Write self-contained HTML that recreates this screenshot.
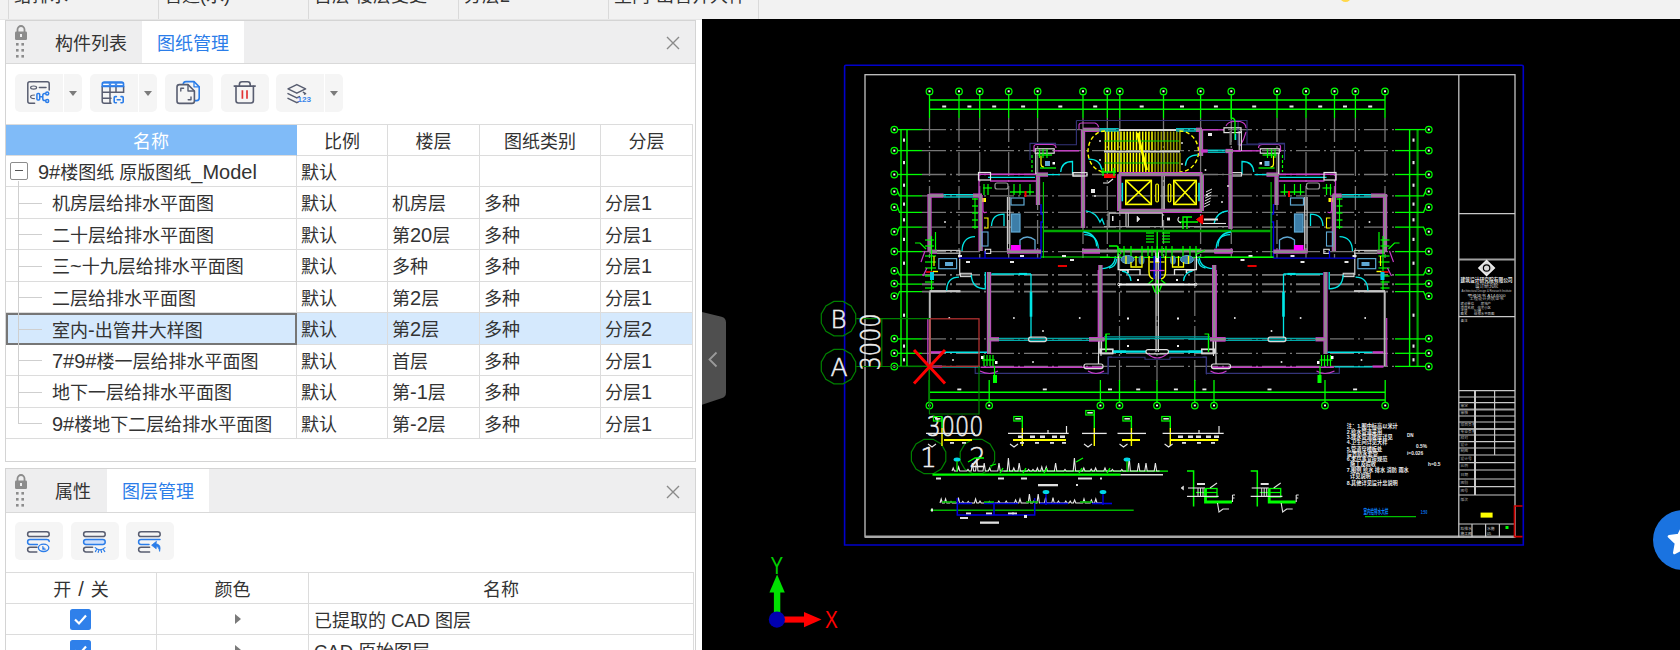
<!DOCTYPE html>
<html lang="zh-CN">
<head>
<meta charset="utf-8">
<title>图纸管理</title>
<style>
html,body{margin:0;padding:0;}
body{width:1680px;height:650px;overflow:hidden;position:relative;background:#fff;font-family:"Liberation Sans","Noto Sans CJK SC",sans-serif;font-size:18px;color:#333;}
.abs{position:absolute;}
#top{left:0;top:0;width:1680px;height:19px;background:#f2f2f2;border-bottom:1px solid #e6e6e6;overflow:hidden;}
#top .sep{position:absolute;top:0;width:1px;height:19px;background:#dadada;}
#top .t{position:absolute;top:-15px;font-size:18px;line-height:22px;color:#333;white-space:nowrap;}
#cad{left:702px;top:19px;width:978px;height:631px;background:#000;}
.panel{left:5px;width:691px;border:1px solid #d4d4d4;background:#fff;box-sizing:border-box;}
.tabbar{position:absolute;left:0;top:0;width:689px;height:42px;background:#eeeeef;border-bottom:1px solid #d9d9d9;}
.tab{position:absolute;top:0;height:42px;line-height:46px;overflow:hidden;font-size:18px;white-space:nowrap;color:#333;}
.tab.act{background:#fff;color:#2b7de9;height:42px;}
.close{position:absolute;right:15px;top:15px;width:14px;height:14px;}
.btn{position:absolute;height:38px;background:#f5f5f5;}
.btn.l{border-radius:5px 0 0 5px;width:48px;}
.btn.r{border-radius:0 5px 5px 0;width:18px;}
.btn.s{border-radius:5px;width:48px;}
.arr{position:absolute;left:5px;top:17px;width:0;height:0;border-left:4px solid transparent;border-right:4px solid transparent;border-top:5px solid #7b7b7b;}
.grid{position:absolute;}
.cell{position:absolute;box-sizing:border-box;border-right:1px solid #dcdcdc;border-bottom:1px solid #dcdcdc;white-space:nowrap;overflow:hidden;font-size:18px;}
.la{font-size:20px;letter-spacing:0;line-height:0;}
.lu{font-size:18.5px;line-height:0;}
</style>
</head>
<body>
<div id="top" class="abs">
  <div class="sep" style="left:8px"></div><div class="sep" style="left:158px"></div><div class="sep" style="left:308px"></div><div class="sep" style="left:458px"></div><div class="sep" style="left:608px"></div><div class="sep" style="left:758px"></div>
  <div class="t" style="left:14px">给排水</div>
  <div class="t" style="left:164px">管道(水)</div>
  <div class="t" style="left:314px">首层 楼层变更</div>
  <div class="t" style="left:464px">分层2</div>
  <div class="t" style="left:614px">室内-出管井大样</div>
  <div class="abs" style="left:1340px;top:-9px;width:11px;height:11px;border-radius:6px;background:#ffd84a;"></div>
</div>
<div id="cad" class="abs">
<svg class="abs" style="left:0;top:1px" width="978" height="630" viewBox="702 20 978 630" font-family="'Liberation Sans',sans-serif">
<g id="frames">
<path d="M844.6 545 V66.5 Q844.6 65.3 845.8 65.3 H1522 Q1523.3 65.3 1523.3 66.5 V545 Z" stroke="#0000cc" stroke-width="1.6" fill="none"/>
<rect x="865" y="74.7" width="650" height="462.3" stroke="#c4c4c4" stroke-width="1.3" fill="none"/>
<line x1="865" y1="536.8" x2="1515" y2="536.8" stroke="#a8a8a8" stroke-width="2.6"/>
<line x1="1458.8" y1="74.7" x2="1458.8" y2="537" stroke="#c4c4c4" stroke-width="1.3"/>
<line x1="1458.8" y1="213.6" x2="1515" y2="213.6" stroke="#c8c8c8" stroke-width="1.2"/>
<line x1="1458.8" y1="316.6" x2="1515" y2="316.6" stroke="#c8c8c8" stroke-width="1.2"/>
<line x1="1458.8" y1="390.6" x2="1515" y2="390.6" stroke="#c8c8c8" stroke-width="1.2"/>
<line x1="1458.8" y1="397" x2="1515" y2="397" stroke="#c8c8c8" stroke-width="1.2"/>
<line x1="1458.8" y1="402.6" x2="1515" y2="402.6" stroke="#c8c8c8" stroke-width="1.2"/>
<line x1="1458.8" y1="416" x2="1515" y2="416" stroke="#c8c8c8" stroke-width="1.2"/>
<line x1="1458.8" y1="422" x2="1515" y2="422" stroke="#c8c8c8" stroke-width="1.2"/>
<line x1="1458.8" y1="435" x2="1515" y2="435" stroke="#c8c8c8" stroke-width="1.2"/>
<line x1="1458.8" y1="441.6" x2="1515" y2="441.6" stroke="#c8c8c8" stroke-width="1.2"/>
<line x1="1458.8" y1="448" x2="1515" y2="448" stroke="#c8c8c8" stroke-width="1.2"/>
<line x1="1458.8" y1="455" x2="1515" y2="455" stroke="#c8c8c8" stroke-width="1.2"/>
<line x1="1458.8" y1="462.6" x2="1515" y2="462.6" stroke="#c8c8c8" stroke-width="1.2"/>
<line x1="1458.8" y1="470" x2="1515" y2="470" stroke="#c8c8c8" stroke-width="1.2"/>
<line x1="1458.8" y1="479" x2="1515" y2="479" stroke="#c8c8c8" stroke-width="1.2"/>
<line x1="1458.8" y1="486.6" x2="1515" y2="486.6" stroke="#c8c8c8" stroke-width="1.2"/>
<line x1="1458.8" y1="495" x2="1515" y2="495" stroke="#c8c8c8" stroke-width="1.2"/>
<line x1="1458.8" y1="524" x2="1515" y2="524" stroke="#c8c8c8" stroke-width="1.2"/>
<line x1="1458.8" y1="259.4" x2="1515" y2="259.4" stroke="#a0a0a0" stroke-width="2"/>
<line x1="1458.8" y1="409.4" x2="1515" y2="409.4" stroke="#a0a0a0" stroke-width="2"/>
<line x1="1458.8" y1="429" x2="1515" y2="429" stroke="#a0a0a0" stroke-width="2"/>
<line x1="1475" y1="390.6" x2="1475" y2="495" stroke="#c8c8c8" stroke-width="2"/>
<line x1="1494.6" y1="390.6" x2="1494.6" y2="455" stroke="#c8c8c8" stroke-width="1.2"/>
<line x1="1472" y1="524" x2="1472" y2="537" stroke="#c8c8c8" stroke-width="1.2"/>
<line x1="1485.6" y1="524" x2="1485.6" y2="537" stroke="#c8c8c8" stroke-width="1.2"/>
<line x1="1499.4" y1="524" x2="1499.4" y2="537" stroke="#c8c8c8" stroke-width="1.2"/>
<rect x="1480.6" y="512.6" width="12" height="5" fill="#ffff00"/>
<rect x="1505.5" y="526" width="3" height="3" fill="#00ff00"/>
<path d="M1522.5 506 H1514.5 V536.6 H1522.5" stroke="#d00000" stroke-width="1.6" fill="none"/>
</g>
<g id="grid">
<line x1="929.5" y1="118" x2="929.5" y2="258" stroke="#767676" stroke-width="1.3" stroke-dasharray="24 4 2 4"/>
<line x1="959" y1="118" x2="959" y2="258" stroke="#767676" stroke-width="1.3" stroke-dasharray="24 4 2 4"/>
<line x1="979.7" y1="118" x2="979.7" y2="258" stroke="#767676" stroke-width="1.3" stroke-dasharray="24 4 2 4"/>
<line x1="1008.7" y1="118" x2="1008.7" y2="258" stroke="#767676" stroke-width="1.3" stroke-dasharray="24 4 2 4"/>
<line x1="1037.6" y1="118" x2="1037.6" y2="258" stroke="#767676" stroke-width="1.3" stroke-dasharray="24 4 2 4"/>
<line x1="1083" y1="118" x2="1083" y2="258" stroke="#767676" stroke-width="1.3" stroke-dasharray="24 4 2 4"/>
<line x1="1107.3" y1="118" x2="1107.3" y2="258" stroke="#767676" stroke-width="1.3" stroke-dasharray="24 4 2 4"/>
<line x1="1119.8" y1="118" x2="1119.8" y2="258" stroke="#767676" stroke-width="1.3" stroke-dasharray="24 4 2 4"/>
<line x1="1163.5" y1="118" x2="1163.5" y2="258" stroke="#767676" stroke-width="1.3" stroke-dasharray="24 4 2 4"/>
<line x1="1200.6" y1="118" x2="1200.6" y2="258" stroke="#767676" stroke-width="1.3" stroke-dasharray="24 4 2 4"/>
<line x1="1231.3" y1="118" x2="1231.3" y2="258" stroke="#767676" stroke-width="1.3" stroke-dasharray="24 4 2 4"/>
<line x1="1277" y1="118" x2="1277" y2="258" stroke="#767676" stroke-width="1.3" stroke-dasharray="24 4 2 4"/>
<line x1="1306" y1="118" x2="1306" y2="258" stroke="#767676" stroke-width="1.3" stroke-dasharray="24 4 2 4"/>
<line x1="1334.5" y1="118" x2="1334.5" y2="258" stroke="#767676" stroke-width="1.3" stroke-dasharray="24 4 2 4"/>
<line x1="1355.4" y1="118" x2="1355.4" y2="258" stroke="#767676" stroke-width="1.3" stroke-dasharray="24 4 2 4"/>
<line x1="1385" y1="118" x2="1385" y2="258" stroke="#767676" stroke-width="1.3" stroke-dasharray="24 4 2 4"/>
<line x1="1119.5" y1="258" x2="1119.5" y2="381" stroke="#767676" stroke-width="1.2" stroke-dasharray="24 4 2 4"/>
<line x1="1157" y1="258" x2="1157" y2="381" stroke="#767676" stroke-width="1.2" stroke-dasharray="24 4 2 4"/>
<line x1="1194.8" y1="258" x2="1194.8" y2="381" stroke="#767676" stroke-width="1.2" stroke-dasharray="24 4 2 4"/>
<line x1="922" y1="129.6" x2="1395" y2="129.6" stroke="#767676" stroke-width="1.3" stroke-dasharray="24 4 2 4"/>
<line x1="922" y1="150.6" x2="1395" y2="150.6" stroke="#767676" stroke-width="1.3" stroke-dasharray="24 4 2 4"/>
<line x1="922" y1="174.5" x2="1395" y2="174.5" stroke="#767676" stroke-width="1.3" stroke-dasharray="24 4 2 4"/>
<line x1="922" y1="195.8" x2="1395" y2="195.8" stroke="#767676" stroke-width="1.3" stroke-dasharray="24 4 2 4"/>
<line x1="922" y1="212.4" x2="1395" y2="212.4" stroke="#767676" stroke-width="1.3" stroke-dasharray="24 4 2 4"/>
<line x1="922" y1="227.1" x2="1395" y2="227.1" stroke="#767676" stroke-width="1.3" stroke-dasharray="24 4 2 4"/>
<line x1="922" y1="251.6" x2="1395" y2="251.6" stroke="#767676" stroke-width="1.3" stroke-dasharray="24 4 2 4"/>
<line x1="922" y1="274.9" x2="1395" y2="274.9" stroke="#767676" stroke-width="1.9" stroke-dasharray="24 4 2 4"/>
<line x1="922" y1="284.2" x2="1395" y2="284.2" stroke="#767676" stroke-width="1.9" stroke-dasharray="24 4 2 4"/>
<line x1="922" y1="291.6" x2="1395" y2="291.6" stroke="#767676" stroke-width="1.9" stroke-dasharray="24 4 2 4"/>
<line x1="922" y1="338.9" x2="1395" y2="338.9" stroke="#767676" stroke-width="1.3" stroke-dasharray="24 4 2 4"/>
<line x1="922" y1="353.3" x2="1395" y2="353.3" stroke="#767676" stroke-width="1.3" stroke-dasharray="24 4 2 4"/>
<line x1="922" y1="366.4" x2="1395" y2="366.4" stroke="#767676" stroke-width="1.3" stroke-dasharray="24 4 2 4"/>
</g>
<g id="dims">
<line x1="929.5" y1="100" x2="1385" y2="100" stroke="#00ff00" stroke-width="1.4"/>
<line x1="929.5" y1="109.2" x2="1385" y2="109.2" stroke="#00ff00" stroke-width="1.4"/>
<line x1="929.5" y1="94.5" x2="929.5" y2="118" stroke="#00ff00" stroke-width="1.3"/>
<circle cx="929.5" cy="91.4" r="3.3" stroke="#00ff00" stroke-width="1.2" fill="none"/>
<rect x="928.5" y="90.3" width="2" height="2" fill="#fff"/>
<line x1="959" y1="94.5" x2="959" y2="118" stroke="#00ff00" stroke-width="1.3"/>
<circle cx="959" cy="91.4" r="3.3" stroke="#00ff00" stroke-width="1.2" fill="none"/>
<rect x="958" y="90.3" width="2" height="2" fill="#fff"/>
<line x1="979.7" y1="94.5" x2="979.7" y2="118" stroke="#00ff00" stroke-width="1.3"/>
<circle cx="979.7" cy="91.4" r="3.3" stroke="#00ff00" stroke-width="1.2" fill="none"/>
<rect x="978.7" y="90.3" width="2" height="2" fill="#fff"/>
<line x1="1008.7" y1="94.5" x2="1008.7" y2="118" stroke="#00ff00" stroke-width="1.3"/>
<circle cx="1008.7" cy="91.4" r="3.3" stroke="#00ff00" stroke-width="1.2" fill="none"/>
<rect x="1007.7" y="90.3" width="2" height="2" fill="#fff"/>
<line x1="1037.6" y1="94.5" x2="1037.6" y2="118" stroke="#00ff00" stroke-width="1.3"/>
<circle cx="1037.6" cy="91.4" r="3.3" stroke="#00ff00" stroke-width="1.2" fill="none"/>
<rect x="1036.6" y="90.3" width="2" height="2" fill="#fff"/>
<line x1="1083" y1="94.5" x2="1083" y2="118" stroke="#00ff00" stroke-width="1.3"/>
<circle cx="1083" cy="91.4" r="3.3" stroke="#00ff00" stroke-width="1.2" fill="none"/>
<rect x="1082" y="90.3" width="2" height="2" fill="#fff"/>
<line x1="1107.3" y1="94.5" x2="1107.3" y2="118" stroke="#00ff00" stroke-width="1.3"/>
<circle cx="1107.3" cy="91.4" r="3.3" stroke="#00ff00" stroke-width="1.2" fill="none"/>
<rect x="1106.3" y="90.3" width="2" height="2" fill="#fff"/>
<line x1="1119.8" y1="94.5" x2="1119.8" y2="118" stroke="#00ff00" stroke-width="1.3"/>
<circle cx="1119.8" cy="91.4" r="3.3" stroke="#00ff00" stroke-width="1.2" fill="none"/>
<rect x="1118.8" y="90.3" width="2" height="2" fill="#fff"/>
<line x1="1163.5" y1="94.5" x2="1163.5" y2="118" stroke="#00ff00" stroke-width="1.3"/>
<circle cx="1163.5" cy="91.4" r="3.3" stroke="#00ff00" stroke-width="1.2" fill="none"/>
<rect x="1162.5" y="90.3" width="2" height="2" fill="#fff"/>
<line x1="1200.6" y1="94.5" x2="1200.6" y2="118" stroke="#00ff00" stroke-width="1.3"/>
<circle cx="1200.6" cy="91.4" r="3.3" stroke="#00ff00" stroke-width="1.2" fill="none"/>
<rect x="1199.6" y="90.3" width="2" height="2" fill="#fff"/>
<line x1="1231.3" y1="94.5" x2="1231.3" y2="118" stroke="#00ff00" stroke-width="1.3"/>
<circle cx="1231.3" cy="91.4" r="3.3" stroke="#00ff00" stroke-width="1.2" fill="none"/>
<rect x="1230.3" y="90.3" width="2" height="2" fill="#fff"/>
<line x1="1277" y1="94.5" x2="1277" y2="118" stroke="#00ff00" stroke-width="1.3"/>
<circle cx="1277" cy="91.4" r="3.3" stroke="#00ff00" stroke-width="1.2" fill="none"/>
<rect x="1276" y="90.3" width="2" height="2" fill="#fff"/>
<line x1="1306" y1="94.5" x2="1306" y2="118" stroke="#00ff00" stroke-width="1.3"/>
<circle cx="1306" cy="91.4" r="3.3" stroke="#00ff00" stroke-width="1.2" fill="none"/>
<rect x="1305" y="90.3" width="2" height="2" fill="#fff"/>
<line x1="1334.5" y1="94.5" x2="1334.5" y2="118" stroke="#00ff00" stroke-width="1.3"/>
<circle cx="1334.5" cy="91.4" r="3.3" stroke="#00ff00" stroke-width="1.2" fill="none"/>
<rect x="1333.5" y="90.3" width="2" height="2" fill="#fff"/>
<line x1="1355.4" y1="94.5" x2="1355.4" y2="118" stroke="#00ff00" stroke-width="1.3"/>
<circle cx="1355.4" cy="91.4" r="3.3" stroke="#00ff00" stroke-width="1.2" fill="none"/>
<rect x="1354.4" y="90.3" width="2" height="2" fill="#fff"/>
<line x1="1385" y1="94.5" x2="1385" y2="118" stroke="#00ff00" stroke-width="1.3"/>
<circle cx="1385" cy="91.4" r="3.3" stroke="#00ff00" stroke-width="1.2" fill="none"/>
<rect x="1384" y="90.3" width="2" height="2" fill="#fff"/>
<line x1="929.4" y1="392.3" x2="1385.2" y2="392.3" stroke="#00ff00" stroke-width="1.4"/>
<line x1="929.4" y1="400" x2="1385.2" y2="400" stroke="#00ff00" stroke-width="1.4"/>
<line x1="929.4" y1="380" x2="929.4" y2="402" stroke="#00ff00" stroke-width="1.3"/>
<circle cx="929.4" cy="405.6" r="3.3" stroke="#00ff00" stroke-width="1.2" fill="none"/>
<rect x="928.4" y="404.6" width="2" height="1.8" fill="#fff"/>
<line x1="989.2" y1="380" x2="989.2" y2="402" stroke="#00ff00" stroke-width="1.3"/>
<circle cx="989.2" cy="405.6" r="3.3" stroke="#00ff00" stroke-width="1.2" fill="none"/>
<rect x="988.2" y="404.6" width="2" height="1.8" fill="#fff"/>
<line x1="1100.4" y1="380" x2="1100.4" y2="402" stroke="#00ff00" stroke-width="1.3"/>
<circle cx="1100.4" cy="405.6" r="3.3" stroke="#00ff00" stroke-width="1.2" fill="none"/>
<rect x="1099.4" y="404.6" width="2" height="1.8" fill="#fff"/>
<line x1="1119.5" y1="380" x2="1119.5" y2="402" stroke="#00ff00" stroke-width="1.3"/>
<circle cx="1119.5" cy="405.6" r="3.3" stroke="#00ff00" stroke-width="1.2" fill="none"/>
<rect x="1118.5" y="404.6" width="2" height="1.8" fill="#fff"/>
<line x1="1157" y1="380" x2="1157" y2="402" stroke="#00ff00" stroke-width="1.3"/>
<circle cx="1157" cy="405.6" r="3.3" stroke="#00ff00" stroke-width="1.2" fill="none"/>
<rect x="1156" y="404.6" width="2" height="1.8" fill="#fff"/>
<line x1="1194.8" y1="380" x2="1194.8" y2="402" stroke="#00ff00" stroke-width="1.3"/>
<circle cx="1194.8" cy="405.6" r="3.3" stroke="#00ff00" stroke-width="1.2" fill="none"/>
<rect x="1193.8" y="404.6" width="2" height="1.8" fill="#fff"/>
<line x1="1214" y1="380" x2="1214" y2="402" stroke="#00ff00" stroke-width="1.3"/>
<circle cx="1214" cy="405.6" r="3.3" stroke="#00ff00" stroke-width="1.2" fill="none"/>
<rect x="1213" y="404.6" width="2" height="1.8" fill="#fff"/>
<line x1="1325" y1="380" x2="1325" y2="402" stroke="#00ff00" stroke-width="1.3"/>
<circle cx="1325" cy="405.6" r="3.3" stroke="#00ff00" stroke-width="1.2" fill="none"/>
<rect x="1324" y="404.6" width="2" height="1.8" fill="#fff"/>
<line x1="1385.2" y1="380" x2="1385.2" y2="402" stroke="#00ff00" stroke-width="1.3"/>
<circle cx="1385.2" cy="405.6" r="3.3" stroke="#00ff00" stroke-width="1.2" fill="none"/>
<rect x="1384.2" y="404.6" width="2" height="1.8" fill="#fff"/>
<line x1="929.4" y1="366.4" x2="929.4" y2="402" stroke="#00ff00" stroke-width="1.2"/>
<line x1="901" y1="129.6" x2="901" y2="366.5" stroke="#00ff00" stroke-width="1.4"/>
<line x1="907" y1="129.6" x2="907" y2="366.5" stroke="#00ff00" stroke-width="1.4"/>
<circle cx="894.3" cy="129.6" r="3.3" stroke="#00ff00" stroke-width="1.2" fill="none"/>
<rect x="893.3" y="128.6" width="2" height="2" fill="#fff"/>
<line x1="897.6" y1="129.6" x2="922" y2="129.6" stroke="#00ff00" stroke-width="1.3"/>
<circle cx="894.3" cy="150.6" r="3.3" stroke="#00ff00" stroke-width="1.2" fill="none"/>
<rect x="893.3" y="149.6" width="2" height="2" fill="#fff"/>
<line x1="897.6" y1="150.6" x2="922" y2="150.6" stroke="#00ff00" stroke-width="1.3"/>
<circle cx="894.3" cy="174.5" r="3.3" stroke="#00ff00" stroke-width="1.2" fill="none"/>
<rect x="893.3" y="173.5" width="2" height="2" fill="#fff"/>
<line x1="897.6" y1="174.5" x2="922" y2="174.5" stroke="#00ff00" stroke-width="1.3"/>
<circle cx="894.3" cy="191.5" r="3.3" stroke="#00ff00" stroke-width="1.2" fill="none"/>
<rect x="893.3" y="190.5" width="2" height="2" fill="#fff"/>
<path d="M897.6 191.5 L899.5 195.8 L922 195.8" stroke="#00ff00" stroke-width="1.3" fill="none"/>
<circle cx="894.3" cy="207.2" r="3.3" stroke="#00ff00" stroke-width="1.2" fill="none"/>
<rect x="893.3" y="206.2" width="2" height="2" fill="#fff"/>
<path d="M897.6 207.2 L899.5 212.4 L922 212.4" stroke="#00ff00" stroke-width="1.3" fill="none"/>
<circle cx="894.3" cy="231.7" r="3.3" stroke="#00ff00" stroke-width="1.2" fill="none"/>
<rect x="893.3" y="230.7" width="2" height="2" fill="#fff"/>
<path d="M897.6 231.7 L899.5 227.1 L922 227.1" stroke="#00ff00" stroke-width="1.3" fill="none"/>
<circle cx="894.3" cy="251.5" r="3.3" stroke="#00ff00" stroke-width="1.2" fill="none"/>
<rect x="893.3" y="250.5" width="2" height="2" fill="#fff"/>
<line x1="897.6" y1="251.6" x2="922" y2="251.6" stroke="#00ff00" stroke-width="1.3"/>
<circle cx="894.3" cy="270.8" r="3.3" stroke="#00ff00" stroke-width="1.2" fill="none"/>
<rect x="893.3" y="269.8" width="2" height="2" fill="#fff"/>
<path d="M897.6 270.8 L899.5 274.9 L922 274.9" stroke="#00ff00" stroke-width="1.3" fill="none"/>
<circle cx="894.3" cy="283.6" r="3.3" stroke="#00ff00" stroke-width="1.2" fill="none"/>
<rect x="893.3" y="282.6" width="2" height="2" fill="#fff"/>
<path d="M897.6 283.6 L899.5 284.2 L922 284.2" stroke="#00ff00" stroke-width="1.3" fill="none"/>
<circle cx="894.3" cy="296.1" r="3.3" stroke="#00ff00" stroke-width="1.2" fill="none"/>
<rect x="893.3" y="295.1" width="2" height="2" fill="#fff"/>
<path d="M897.6 296.1 L899.5 291.6 L922 291.6" stroke="#00ff00" stroke-width="1.3" fill="none"/>
<circle cx="894.3" cy="338.6" r="3.3" stroke="#00ff00" stroke-width="1.2" fill="none"/>
<rect x="893.3" y="337.6" width="2" height="2" fill="#fff"/>
<line x1="897.6" y1="338.9" x2="922" y2="338.9" stroke="#00ff00" stroke-width="1.3"/>
<circle cx="894.3" cy="353.2" r="3.3" stroke="#00ff00" stroke-width="1.2" fill="none"/>
<rect x="893.3" y="352.2" width="2" height="2" fill="#fff"/>
<line x1="897.6" y1="353.3" x2="922" y2="353.3" stroke="#00ff00" stroke-width="1.3"/>
<circle cx="894.3" cy="366.5" r="3.3" stroke="#00ff00" stroke-width="1.2" fill="none"/>
<rect x="893.3" y="365.5" width="2" height="2" fill="#fff"/>
<line x1="897.6" y1="366.4" x2="922" y2="366.4" stroke="#00ff00" stroke-width="1.3"/>
<line x1="1417.6" y1="129.6" x2="1417.6" y2="366.5" stroke="#00a000" stroke-width="2.2"/>
<line x1="1409.6" y1="129.6" x2="1409.6" y2="366.5" stroke="#00ff00" stroke-width="1.4"/>
<circle cx="1428.8" cy="129.6" r="3.3" stroke="#00ff00" stroke-width="1.2" fill="none"/>
<rect x="1427.8" y="128.6" width="2" height="2" fill="#fff"/>
<line x1="1425.5" y1="129.6" x2="1395" y2="129.6" stroke="#00ff00" stroke-width="1.3"/>
<circle cx="1428.8" cy="150.6" r="3.3" stroke="#00ff00" stroke-width="1.2" fill="none"/>
<rect x="1427.8" y="149.6" width="2" height="2" fill="#fff"/>
<line x1="1425.5" y1="150.6" x2="1395" y2="150.6" stroke="#00ff00" stroke-width="1.3"/>
<circle cx="1428.8" cy="174.5" r="3.3" stroke="#00ff00" stroke-width="1.2" fill="none"/>
<rect x="1427.8" y="173.5" width="2" height="2" fill="#fff"/>
<line x1="1425.5" y1="174.5" x2="1395" y2="174.5" stroke="#00ff00" stroke-width="1.3"/>
<circle cx="1428.8" cy="191.5" r="3.3" stroke="#00ff00" stroke-width="1.2" fill="none"/>
<rect x="1427.8" y="190.5" width="2" height="2" fill="#fff"/>
<path d="M1425.5 191.5 L1423.5 195.8 L1395 195.8" stroke="#00ff00" stroke-width="1.3" fill="none"/>
<circle cx="1428.8" cy="207.2" r="3.3" stroke="#00ff00" stroke-width="1.2" fill="none"/>
<rect x="1427.8" y="206.2" width="2" height="2" fill="#fff"/>
<path d="M1425.5 207.2 L1423.5 212.4 L1395 212.4" stroke="#00ff00" stroke-width="1.3" fill="none"/>
<circle cx="1428.8" cy="231.7" r="3.3" stroke="#00ff00" stroke-width="1.2" fill="none"/>
<rect x="1427.8" y="230.7" width="2" height="2" fill="#fff"/>
<path d="M1425.5 231.7 L1423.5 227.1 L1395 227.1" stroke="#00ff00" stroke-width="1.3" fill="none"/>
<circle cx="1428.8" cy="251.5" r="3.3" stroke="#00ff00" stroke-width="1.2" fill="none"/>
<rect x="1427.8" y="250.5" width="2" height="2" fill="#fff"/>
<line x1="1425.5" y1="251.6" x2="1395" y2="251.6" stroke="#00ff00" stroke-width="1.3"/>
<circle cx="1428.8" cy="270.8" r="3.3" stroke="#00ff00" stroke-width="1.2" fill="none"/>
<rect x="1427.8" y="269.8" width="2" height="2" fill="#fff"/>
<path d="M1425.5 270.8 L1423.5 274.9 L1395 274.9" stroke="#00ff00" stroke-width="1.3" fill="none"/>
<circle cx="1428.8" cy="283.6" r="3.3" stroke="#00ff00" stroke-width="1.2" fill="none"/>
<rect x="1427.8" y="282.6" width="2" height="2" fill="#fff"/>
<path d="M1425.5 283.6 L1423.5 284.2 L1395 284.2" stroke="#00ff00" stroke-width="1.3" fill="none"/>
<circle cx="1428.8" cy="296.1" r="3.3" stroke="#00ff00" stroke-width="1.2" fill="none"/>
<rect x="1427.8" y="295.1" width="2" height="2" fill="#fff"/>
<path d="M1425.5 296.1 L1423.5 291.6 L1395 291.6" stroke="#00ff00" stroke-width="1.3" fill="none"/>
<circle cx="1428.8" cy="338.6" r="3.3" stroke="#00ff00" stroke-width="1.2" fill="none"/>
<rect x="1427.8" y="337.6" width="2" height="2" fill="#fff"/>
<line x1="1425.5" y1="338.9" x2="1395" y2="338.9" stroke="#00ff00" stroke-width="1.3"/>
<circle cx="1428.8" cy="353.2" r="3.3" stroke="#00ff00" stroke-width="1.2" fill="none"/>
<rect x="1427.8" y="352.2" width="2" height="2" fill="#fff"/>
<line x1="1425.5" y1="353.3" x2="1395" y2="353.3" stroke="#00ff00" stroke-width="1.3"/>
<circle cx="1428.8" cy="366.5" r="3.3" stroke="#00ff00" stroke-width="1.2" fill="none"/>
<rect x="1427.8" y="365.5" width="2" height="2" fill="#fff"/>
<line x1="1425.5" y1="366.4" x2="1395" y2="366.4" stroke="#00ff00" stroke-width="1.3"/>
<rect x="942.2" y="105.5" width="4" height="2" fill="#e8e8e8"/>
<rect x="967.4" y="105.5" width="4" height="2" fill="#e8e8e8"/>
<rect x="992.2" y="105.5" width="4" height="2" fill="#e8e8e8"/>
<rect x="1021.1" y="105.5" width="4" height="2" fill="#e8e8e8"/>
<rect x="1058.3" y="105.5" width="4" height="2" fill="#e8e8e8"/>
<rect x="1093.2" y="105.5" width="4" height="2" fill="#e8e8e8"/>
<rect x="1139.7" y="105.5" width="4" height="2" fill="#e8e8e8"/>
<rect x="1180" y="105.5" width="4" height="2" fill="#e8e8e8"/>
<rect x="1213.9" y="105.5" width="4" height="2" fill="#e8e8e8"/>
<rect x="1252.2" y="105.5" width="4" height="2" fill="#e8e8e8"/>
<rect x="1289.5" y="105.5" width="4" height="2" fill="#e8e8e8"/>
<rect x="1318.2" y="105.5" width="4" height="2" fill="#e8e8e8"/>
<rect x="1343" y="105.5" width="4" height="2" fill="#e8e8e8"/>
<rect x="1368.2" y="105.5" width="4" height="2" fill="#e8e8e8"/>
<rect x="957.3" y="388.5" width="4" height="1.8" fill="#e8e8e8"/>
<rect x="1042.8" y="388.5" width="4" height="1.8" fill="#e8e8e8"/>
<rect x="1108" y="388.5" width="4" height="1.8" fill="#e8e8e8"/>
<rect x="1136.2" y="388.5" width="4" height="1.8" fill="#e8e8e8"/>
<rect x="1173.9" y="388.5" width="4" height="1.8" fill="#e8e8e8"/>
<rect x="1202.4" y="388.5" width="4" height="1.8" fill="#e8e8e8"/>
<rect x="1267.5" y="388.5" width="4" height="1.8" fill="#e8e8e8"/>
<rect x="1353.1" y="388.5" width="4" height="1.8" fill="#e8e8e8"/>
<rect x="903" y="138.5" width="2" height="3.2" fill="#e8e8e8"/>
<rect x="1412.5" y="138.5" width="2" height="3.2" fill="#e8e8e8"/>
<rect x="903" y="161" width="2" height="3.2" fill="#e8e8e8"/>
<rect x="1412.5" y="161" width="2" height="3.2" fill="#e8e8e8"/>
<rect x="903" y="183.6" width="2" height="3.2" fill="#e8e8e8"/>
<rect x="1412.5" y="183.6" width="2" height="3.2" fill="#e8e8e8"/>
<rect x="903" y="202.5" width="2" height="3.2" fill="#e8e8e8"/>
<rect x="1412.5" y="202.5" width="2" height="3.2" fill="#e8e8e8"/>
<rect x="903" y="218.2" width="2" height="3.2" fill="#e8e8e8"/>
<rect x="1412.5" y="218.2" width="2" height="3.2" fill="#e8e8e8"/>
<rect x="903" y="237.8" width="2" height="3.2" fill="#e8e8e8"/>
<rect x="1412.5" y="237.8" width="2" height="3.2" fill="#e8e8e8"/>
<rect x="903" y="261.6" width="2" height="3.2" fill="#e8e8e8"/>
<rect x="1412.5" y="261.6" width="2" height="3.2" fill="#e8e8e8"/>
<rect x="903" y="313.6" width="2" height="3.2" fill="#e8e8e8"/>
<rect x="1412.5" y="313.6" width="2" height="3.2" fill="#e8e8e8"/>
<rect x="903" y="344.5" width="2" height="3.2" fill="#e8e8e8"/>
<rect x="1412.5" y="344.5" width="2" height="3.2" fill="#e8e8e8"/>
<rect x="903" y="358.2" width="2" height="3.2" fill="#e8e8e8"/>
<rect x="1412.5" y="358.2" width="2" height="3.2" fill="#e8e8e8"/>
</g>
<g id="wingL">
<path d="M1076.4 120.5 V144.7 H1055.5 V143.4 H1030 V160" stroke="#34347a" stroke-width="1.1" fill="none"/>
<path d="M975.2 366 V373.4 H1108.3 V357 H1112" stroke="#34347a" stroke-width="1.1" fill="none"/>
<line x1="929.5" y1="194" x2="929.5" y2="252" stroke="#c83cc8" stroke-width="4.3"/>
<line x1="929.5" y1="194" x2="929.5" y2="252" stroke="#8c8c8c" stroke-width="2.6"/>
<line x1="929.5" y1="195.6" x2="943.5" y2="195.6" stroke="#c83cc8" stroke-width="4.3"/>
<line x1="929.5" y1="195.6" x2="943.5" y2="195.6" stroke="#8c8c8c" stroke-width="2.6"/>
<line x1="943.5" y1="194.6" x2="973" y2="194.6" stroke="#00e5e5" stroke-width="1.2"/>
<line x1="943.5" y1="197" x2="973" y2="197" stroke="#00e5e5" stroke-width="1.2"/>
<line x1="973" y1="195.6" x2="982" y2="195.6" stroke="#c83cc8" stroke-width="4.3"/>
<line x1="973" y1="195.6" x2="982" y2="195.6" stroke="#8c8c8c" stroke-width="2.6"/>
<line x1="980.6" y1="195" x2="980.6" y2="251" stroke="#c83cc8" stroke-width="4.3"/>
<line x1="980.6" y1="195" x2="980.6" y2="251" stroke="#8c8c8c" stroke-width="2.6"/>
<line x1="979" y1="174" x2="979" y2="195" stroke="#c83cc8" stroke-width="1.3"/>
<line x1="979" y1="174.2" x2="1036" y2="174.2" stroke="#c83cc8" stroke-width="1.4"/>
<line x1="990" y1="181" x2="1036" y2="181" stroke="#c83cc8" stroke-width="1.4"/>
<line x1="988" y1="177.3" x2="1035" y2="177.3" stroke="#00e5e5" stroke-width="1.3"/>
<rect x="978.5" y="172.5" width="12" height="7.5" stroke="#e8e8e8" stroke-width="1.2" fill="none"/>
<rect x="995" y="183" width="13" height="6" stroke="#9a9a9a" stroke-width="1.2" fill="none" rx="2"/>
<line x1="984" y1="184" x2="984" y2="195" stroke="#00ff00" stroke-width="1.2"/>
<line x1="988" y1="184" x2="988" y2="195" stroke="#00ff00" stroke-width="1.2"/>
<line x1="1014" y1="184" x2="1014" y2="195" stroke="#00ff00" stroke-width="1.2"/>
<line x1="1020" y1="184" x2="1020" y2="195" stroke="#00ff00" stroke-width="1.2"/>
<line x1="1030" y1="184" x2="1030" y2="195" stroke="#00ff00" stroke-width="1.2"/>
<line x1="983" y1="188" x2="992" y2="188" stroke="#00ff00" stroke-width="1.2"/>
<line x1="1010" y1="192" x2="1034" y2="192" stroke="#00ff00" stroke-width="1.4"/>
<rect x="1024.5" y="191" width="2" height="6" fill="#ff0000"/>
<rect x="982" y="198" width="4" height="4" fill="#ffff00"/>
<line x1="1038" y1="173" x2="1038" y2="205" stroke="#c83cc8" stroke-width="4.3"/>
<line x1="1038" y1="173" x2="1038" y2="205" stroke="#8c8c8c" stroke-width="2.6"/>
<line x1="1036" y1="174.6" x2="1048" y2="174.6" stroke="#c83cc8" stroke-width="4.3"/>
<line x1="1036" y1="174.6" x2="1048" y2="174.6" stroke="#8c8c8c" stroke-width="2.6"/>
<line x1="1035.8" y1="153" x2="1035.8" y2="174" stroke="#d0d0d0" stroke-width="1.4"/>
<rect x="1035.2" y="148.8" width="19" height="4.4" stroke="#e0e0e0" stroke-width="1.2" fill="none"/>
<path d="M1034 152 V146.5 Q1034 144.5 1037 144.5 H1052 Q1056 144.5 1056 148" stroke="#c83cc8" stroke-width="1.2" fill="none"/>
<line x1="1054" y1="150.8" x2="1079" y2="150.8" stroke="#c83cc8" stroke-width="1.4"/>
<path d="M1060.7 172 Q1061.5 161.5 1072.5 161.5 V174" stroke="#00e5e5" stroke-width="1.3" fill="none"/>
<rect x="1073" y="172.6" width="10" height="3.4" stroke="#e0e0e0" stroke-width="1.1" fill="none"/>
<line x1="1048" y1="174.6" x2="1060" y2="174.6" stroke="#00e5e5" stroke-width="1.3"/>
<line x1="1039.5" y1="149" x2="1039.5" y2="158" stroke="#00ff00" stroke-width="1.2"/>
<line x1="1043" y1="149" x2="1043" y2="158" stroke="#00ff00" stroke-width="1.2"/>
<line x1="1047" y1="149" x2="1047" y2="158" stroke="#00ff00" stroke-width="1.2"/>
<line x1="1038" y1="155" x2="1052" y2="155" stroke="#00ff00" stroke-width="1.3"/>
<line x1="1040" y1="168" x2="1056" y2="168" stroke="#00ff00" stroke-width="1.3"/>
<path d="M1041 156 V164 Q1041 167 1044 167" stroke="#ffff00" stroke-width="1.2" fill="none"/>
<rect x="1045" y="161" width="5" height="5" fill="#5fa8d3"/>
<rect x="1052.5" y="162" width="2.5" height="2.5" fill="#fff"/>
<line x1="1032" y1="155" x2="1032" y2="172" stroke="#00ff00" stroke-width="1.2" stroke-dasharray="3 2"/>
<line x1="1007.4" y1="197" x2="1007.4" y2="251" stroke="#d8d8d8" stroke-width="1.1"/>
<line x1="1009.8" y1="197" x2="1009.8" y2="251" stroke="#d8d8d8" stroke-width="1.1"/>
<rect x="1011.5" y="214" width="8.5" height="18" stroke="#5fa8d3" stroke-width="1.2" fill="#3d7ea8"/>
<path d="M1020 250 V240 Q1027 234 1035 240 V250" stroke="#5fa8d3" stroke-width="1.3" fill="none"/>
<rect x="1011" y="198" width="13" height="7" stroke="#5fa8d3" stroke-width="1.2" fill="none"/>
<path d="M991.5 226 Q992 214.2 1004 214.2 V226" stroke="#00e5e5" stroke-width="1.3" fill="none"/>
<path d="M962 251 Q962.5 237 975 236.7" stroke="#00e5e5" stroke-width="1.3" fill="none"/>
<line x1="972" y1="199" x2="978" y2="199" stroke="#00ff00" stroke-width="1.3"/>
<line x1="972" y1="206" x2="978" y2="206" stroke="#00ff00" stroke-width="1.3"/>
<line x1="972" y1="213" x2="978" y2="213" stroke="#00ff00" stroke-width="1.3"/>
<line x1="972" y1="220" x2="978" y2="220" stroke="#00ff00" stroke-width="1.3"/>
<line x1="972" y1="227" x2="978" y2="227" stroke="#00ff00" stroke-width="1.3"/>
<line x1="975" y1="198" x2="975" y2="229" stroke="#00ff00" stroke-width="1.1"/>
<path d="M1041 204 V214 H1043 V222 H1041 V258.2" stroke="#0000e0" stroke-width="1.4" fill="none"/>
<line x1="1043.4" y1="182" x2="1043.4" y2="258" stroke="#00d000" stroke-width="1.1"/>
<path d="M983 198 V210 Q983 214 987 212" stroke="#c83cc8" stroke-width="1.1" fill="none"/>
<path d="M984 218 H988 V228 H984" stroke="#ffff00" stroke-width="1.1" fill="none"/>
<rect x="982" y="232" width="6" height="14" stroke="#5fa8d3" stroke-width="1.1" fill="none"/>
<line x1="929.5" y1="251.7" x2="937" y2="251.7" stroke="#c83cc8" stroke-width="4.3"/>
<line x1="929.5" y1="251.7" x2="937" y2="251.7" stroke="#8c8c8c" stroke-width="2.6"/>
<line x1="937" y1="250.4" x2="960.5" y2="250.4" stroke="#d0d0d0" stroke-width="1.1"/>
<line x1="937" y1="253.2" x2="960.5" y2="253.2" stroke="#d0d0d0" stroke-width="1.1"/>
<line x1="959.7" y1="251" x2="959.7" y2="275" stroke="#d0d0d0" stroke-width="1.2"/>
<line x1="929.5" y1="291.2" x2="960.5" y2="291.2" stroke="#c8c8c8" stroke-width="2.2"/>
<rect x="960.5" y="273.3" width="10.8" height="3.3" stroke="#d8d8d8" stroke-width="1.1" fill="none"/>
<rect x="985.3" y="249.3" width="5.4" height="4.1" stroke="#e0e0e0" stroke-width="1.1" fill="none"/>
<rect x="938.8" y="258.6" width="17.8" height="10.1" stroke="#5fa8d3" stroke-width="1.2" fill="none"/>
<rect x="945" y="262" width="8" height="4" fill="#5fa8d3"/>
<path d="M946.6 290.5 Q947 277.2 959 277.2" stroke="#00e5e5" stroke-width="1.3" fill="none"/>
<path d="M971.3 274.9 Q972 288.8 985.3 288.8 V272" stroke="#00e5e5" stroke-width="1.3" fill="none"/>
<line x1="925" y1="240" x2="934" y2="240" stroke="#00ff00" stroke-width="1.2"/>
<line x1="925" y1="246" x2="934" y2="246" stroke="#00ff00" stroke-width="1.2"/>
<line x1="925" y1="256" x2="936" y2="256" stroke="#00ff00" stroke-width="1.2"/>
<line x1="925" y1="262" x2="936" y2="262" stroke="#00ff00" stroke-width="1.2"/>
<line x1="925" y1="268" x2="936" y2="268" stroke="#00ff00" stroke-width="1.2"/>
<line x1="925" y1="276" x2="934" y2="276" stroke="#00ff00" stroke-width="1.2"/>
<line x1="925" y1="282" x2="934" y2="282" stroke="#00ff00" stroke-width="1.2"/>
<line x1="925" y1="288" x2="934" y2="288" stroke="#00ff00" stroke-width="1.2"/>
<line x1="931.5" y1="236" x2="931.5" y2="290" stroke="#00ff00" stroke-width="1.2"/>
<line x1="935.5" y1="232" x2="935.5" y2="250" stroke="#00ff00" stroke-width="1.2"/>
<path d="M915 243 L920 243 L926 249" stroke="#00ff00" stroke-width="1.2" fill="none"/>
<line x1="926" y1="272" x2="933" y2="272" stroke="#ff0000" stroke-width="1.6"/>
<line x1="933" y1="271.5" x2="938" y2="271.5" stroke="#ffff00" stroke-width="1.4"/>
<line x1="934" y1="256" x2="934" y2="266" stroke="#ffff00" stroke-width="1.2"/>
<path d="M925 251 L921 262 M927 268 L923 276" stroke="#c83cc8" stroke-width="1.2" fill="none"/>
<rect x="930" y="272" width="4" height="8" fill="#00c8e0"/>
<line x1="1007" y1="251.7" x2="1041" y2="251.7" stroke="#c83cc8" stroke-width="4.3"/>
<line x1="1007" y1="251.7" x2="1041" y2="251.7" stroke="#8c8c8c" stroke-width="2.6"/>
<rect x="1011" y="245" width="9.5" height="5.3" fill="#ff00ff"/>
<line x1="959" y1="258.2" x2="1041" y2="258.2" stroke="#0000d8" stroke-width="1.2"/>
<line x1="985" y1="251" x2="985" y2="258" stroke="#0000e0" stroke-width="1.3"/>
<line x1="1041" y1="257" x2="1110" y2="257" stroke="#00ff00" stroke-width="1.2"/>
<line x1="1082" y1="251.5" x2="1100" y2="251.5" stroke="#c83cc8" stroke-width="4.3"/>
<line x1="1082" y1="251.5" x2="1100" y2="251.5" stroke="#8c8c8c" stroke-width="2.6"/>
<path d="M1084.3 234.6 Q1098 235 1098.3 248.6" stroke="#00e5e5" stroke-width="1.3" fill="none"/>
<path d="M1101.4 268.7 Q1115 268 1115.3 256.3" stroke="#00e5e5" stroke-width="1.3" fill="none"/>
<line x1="989" y1="272" x2="989" y2="354" stroke="#c83cc8" stroke-width="4.3"/>
<line x1="989" y1="272" x2="989" y2="354" stroke="#8c8c8c" stroke-width="2.6"/>
<line x1="1099.8" y1="270" x2="1099.8" y2="340" stroke="#c83cc8" stroke-width="4.3"/>
<line x1="1099.8" y1="270" x2="1099.8" y2="340" stroke="#8c8c8c" stroke-width="2.6"/>
<line x1="1098.6" y1="340" x2="1098.6" y2="356" stroke="#d8d8d8" stroke-width="1.1"/>
<line x1="1101" y1="340" x2="1101" y2="356" stroke="#d8d8d8" stroke-width="1.1"/>
<line x1="991.5" y1="274" x2="1031" y2="274" stroke="#00e5e5" stroke-width="1.3"/>
<line x1="1019" y1="274" x2="1027" y2="274" stroke="#00e5e5" stroke-width="2.2"/>
<line x1="1031" y1="274" x2="1031" y2="339" stroke="#00e5e5" stroke-width="1.3"/>
<line x1="1031" y1="292" x2="1031" y2="316.7" stroke="#00e5e5" stroke-width="2.6"/>
<line x1="989" y1="339.3" x2="999" y2="339.3" stroke="#c83cc8" stroke-width="4.3"/>
<line x1="989" y1="339.3" x2="999" y2="339.3" stroke="#8c8c8c" stroke-width="2.6"/>
<line x1="1089" y1="339.3" x2="1100" y2="339.3" stroke="#c83cc8" stroke-width="4.3"/>
<line x1="1089" y1="339.3" x2="1100" y2="339.3" stroke="#8c8c8c" stroke-width="2.6"/>
<line x1="999" y1="338.4" x2="1089" y2="338.4" stroke="#00a8a8" stroke-width="1.2"/>
<line x1="999" y1="340.4" x2="1089" y2="340.4" stroke="#00a8a8" stroke-width="1.2"/>
<rect x="1028.6" y="337.2" width="17.8" height="4.4" stroke="#d8d8d8" stroke-width="1.2" fill="none" rx="2"/>
<line x1="929.8" y1="292" x2="929.8" y2="366" stroke="#b8b8b8" stroke-width="2"/>
<line x1="927.8" y1="318" x2="927.8" y2="366" stroke="#c83cc8" stroke-width="1.2"/>
<line x1="931" y1="352.3" x2="942" y2="352.3" stroke="#c83cc8" stroke-width="2.2"/>
<line x1="942" y1="352.2" x2="987" y2="352.2" stroke="#00e5e5" stroke-width="1.4"/>
<line x1="931" y1="366.6" x2="942" y2="366.6" stroke="#c83cc8" stroke-width="2.2"/>
<line x1="942" y1="366.9" x2="980" y2="366.9" stroke="#00e5e5" stroke-width="1.4"/>
<line x1="980.6" y1="367.3" x2="1103" y2="367.3" stroke="#c83cc8" stroke-width="1.5"/>
<rect x="1084" y="364" width="19" height="4.6" stroke="#e0e0e0" stroke-width="1.2" fill="none" rx="2"/>
<path d="M1098.5 356 V364" stroke=" #e0e0e0" stroke-width="1.2" fill="none"/>
<path d="M980 371 Q990 376 998 371" stroke="#c83cc8" stroke-width="1.1" fill="none"/>
<path d="M1088 371 Q1096 376 1104 371" stroke="#c83cc8" stroke-width="1.1" fill="none"/>
<line x1="1112" y1="351.7" x2="1126" y2="351.7" stroke="#00e5e5" stroke-width="2.4"/>
<line x1="1104.5" y1="339" x2="1126" y2="339" stroke="#00a8a8" stroke-width="1.6"/>
<rect x="1100" y="349" width="13" height="4" stroke="#e0e0e0" stroke-width="1.1" fill="none"/>
<line x1="984" y1="355" x2="984" y2="366" stroke="#00ff00" stroke-width="1.2"/>
<line x1="987" y1="355" x2="987" y2="366" stroke="#00ff00" stroke-width="1.2"/>
<line x1="990" y1="355" x2="990" y2="366" stroke="#00ff00" stroke-width="1.2"/>
<line x1="993" y1="355" x2="993" y2="366" stroke="#00ff00" stroke-width="1.2"/>
<line x1="982" y1="360" x2="995" y2="360" stroke="#00ff00" stroke-width="1.3"/>
<line x1="994.5" y1="366" x2="994.5" y2="380" stroke="#00ff00" stroke-width="1.2"/>
<rect x="993" y="375" width="4" height="8" fill="#00ff00"/>
<rect x="981" y="356" width="2.5" height="3" fill="#fff"/>
<rect x="995" y="361" width="2.5" height="3" fill="#fff"/>
<rect x="948.5" y="317.2" width="1.6" height="1.6" fill="#fff"/>
<rect x="1013.1" y="317.2" width="1.6" height="1.6" fill="#fff"/>
<rect x="1078.9" y="317.2" width="1.6" height="1.6" fill="#fff"/>
<rect x="952.2" y="359.2" width="1.6" height="1.6" fill="#fff"/>
<rect x="1032.2" y="361.2" width="1.6" height="1.6" fill="#fff"/>
<rect x="944.2" y="221.2" width="1.6" height="1.6" fill="#fff"/>
<rect x="1042.2" y="330.2" width="1.6" height="1.6" fill="#fff"/>
<rect x="958" y="255" width="4" height="2" fill="#e8e8e8"/>
<rect x="966" y="261" width="4" height="2" fill="#e8e8e8"/>
<rect x="1010" y="261" width="4" height="2" fill="#e8e8e8"/>
<rect x="1020" y="255" width="4" height="2" fill="#e8e8e8"/>
<rect x="1062" y="255" width="4" height="2" fill="#e8e8e8"/>
<rect x="1070" y="259" width="4" height="2" fill="#e8e8e8"/>
<line x1="1057.9" y1="266" x2="1067" y2="266" stroke="#ff0000" stroke-width="1.8"/>
<path d="M1106 352 V334 H1110" stroke="#00ff00" stroke-width="1.2" fill="none"/>
</g>
<g id="wingR" transform="translate(2314.5 0) scale(-1 1)">
<path d="M1076.4 120.5 V144.7 H1055.5 V143.4 H1030 V160" stroke="#34347a" stroke-width="1.1" fill="none"/>
<path d="M975.2 366 V373.4 H1108.3 V357 H1112" stroke="#34347a" stroke-width="1.1" fill="none"/>
<line x1="929.5" y1="194" x2="929.5" y2="252" stroke="#c83cc8" stroke-width="4.3"/>
<line x1="929.5" y1="194" x2="929.5" y2="252" stroke="#8c8c8c" stroke-width="2.6"/>
<line x1="929.5" y1="195.6" x2="943.5" y2="195.6" stroke="#c83cc8" stroke-width="4.3"/>
<line x1="929.5" y1="195.6" x2="943.5" y2="195.6" stroke="#8c8c8c" stroke-width="2.6"/>
<line x1="943.5" y1="194.6" x2="973" y2="194.6" stroke="#00e5e5" stroke-width="1.2"/>
<line x1="943.5" y1="197" x2="973" y2="197" stroke="#00e5e5" stroke-width="1.2"/>
<line x1="973" y1="195.6" x2="982" y2="195.6" stroke="#c83cc8" stroke-width="4.3"/>
<line x1="973" y1="195.6" x2="982" y2="195.6" stroke="#8c8c8c" stroke-width="2.6"/>
<line x1="980.6" y1="195" x2="980.6" y2="251" stroke="#c83cc8" stroke-width="4.3"/>
<line x1="980.6" y1="195" x2="980.6" y2="251" stroke="#8c8c8c" stroke-width="2.6"/>
<line x1="979" y1="174" x2="979" y2="195" stroke="#c83cc8" stroke-width="1.3"/>
<line x1="979" y1="174.2" x2="1036" y2="174.2" stroke="#c83cc8" stroke-width="1.4"/>
<line x1="990" y1="181" x2="1036" y2="181" stroke="#c83cc8" stroke-width="1.4"/>
<line x1="988" y1="177.3" x2="1035" y2="177.3" stroke="#00e5e5" stroke-width="1.3"/>
<rect x="978.5" y="172.5" width="12" height="7.5" stroke="#e8e8e8" stroke-width="1.2" fill="none"/>
<rect x="995" y="183" width="13" height="6" stroke="#9a9a9a" stroke-width="1.2" fill="none" rx="2"/>
<line x1="984" y1="184" x2="984" y2="195" stroke="#00ff00" stroke-width="1.2"/>
<line x1="988" y1="184" x2="988" y2="195" stroke="#00ff00" stroke-width="1.2"/>
<line x1="1014" y1="184" x2="1014" y2="195" stroke="#00ff00" stroke-width="1.2"/>
<line x1="1020" y1="184" x2="1020" y2="195" stroke="#00ff00" stroke-width="1.2"/>
<line x1="1030" y1="184" x2="1030" y2="195" stroke="#00ff00" stroke-width="1.2"/>
<line x1="983" y1="188" x2="992" y2="188" stroke="#00ff00" stroke-width="1.2"/>
<line x1="1010" y1="192" x2="1034" y2="192" stroke="#00ff00" stroke-width="1.4"/>
<rect x="1024.5" y="191" width="2" height="6" fill="#ff0000"/>
<rect x="982" y="198" width="4" height="4" fill="#ffff00"/>
<line x1="1038" y1="173" x2="1038" y2="205" stroke="#c83cc8" stroke-width="4.3"/>
<line x1="1038" y1="173" x2="1038" y2="205" stroke="#8c8c8c" stroke-width="2.6"/>
<line x1="1036" y1="174.6" x2="1048" y2="174.6" stroke="#c83cc8" stroke-width="4.3"/>
<line x1="1036" y1="174.6" x2="1048" y2="174.6" stroke="#8c8c8c" stroke-width="2.6"/>
<line x1="1035.8" y1="153" x2="1035.8" y2="174" stroke="#d0d0d0" stroke-width="1.4"/>
<rect x="1035.2" y="148.8" width="19" height="4.4" stroke="#e0e0e0" stroke-width="1.2" fill="none"/>
<path d="M1034 152 V146.5 Q1034 144.5 1037 144.5 H1052 Q1056 144.5 1056 148" stroke="#c83cc8" stroke-width="1.2" fill="none"/>
<line x1="1054" y1="150.8" x2="1079" y2="150.8" stroke="#c83cc8" stroke-width="1.4"/>
<path d="M1060.7 172 Q1061.5 161.5 1072.5 161.5 V174" stroke="#00e5e5" stroke-width="1.3" fill="none"/>
<rect x="1073" y="172.6" width="10" height="3.4" stroke="#e0e0e0" stroke-width="1.1" fill="none"/>
<line x1="1048" y1="174.6" x2="1060" y2="174.6" stroke="#00e5e5" stroke-width="1.3"/>
<line x1="1039.5" y1="149" x2="1039.5" y2="158" stroke="#00ff00" stroke-width="1.2"/>
<line x1="1043" y1="149" x2="1043" y2="158" stroke="#00ff00" stroke-width="1.2"/>
<line x1="1047" y1="149" x2="1047" y2="158" stroke="#00ff00" stroke-width="1.2"/>
<line x1="1038" y1="155" x2="1052" y2="155" stroke="#00ff00" stroke-width="1.3"/>
<line x1="1040" y1="168" x2="1056" y2="168" stroke="#00ff00" stroke-width="1.3"/>
<path d="M1041 156 V164 Q1041 167 1044 167" stroke="#ffff00" stroke-width="1.2" fill="none"/>
<rect x="1045" y="161" width="5" height="5" fill="#5fa8d3"/>
<rect x="1052.5" y="162" width="2.5" height="2.5" fill="#fff"/>
<line x1="1032" y1="155" x2="1032" y2="172" stroke="#00ff00" stroke-width="1.2" stroke-dasharray="3 2"/>
<line x1="1007.4" y1="197" x2="1007.4" y2="251" stroke="#d8d8d8" stroke-width="1.1"/>
<line x1="1009.8" y1="197" x2="1009.8" y2="251" stroke="#d8d8d8" stroke-width="1.1"/>
<rect x="1011.5" y="214" width="8.5" height="18" stroke="#5fa8d3" stroke-width="1.2" fill="#3d7ea8"/>
<path d="M1020 250 V240 Q1027 234 1035 240 V250" stroke="#5fa8d3" stroke-width="1.3" fill="none"/>
<rect x="1011" y="198" width="13" height="7" stroke="#5fa8d3" stroke-width="1.2" fill="none"/>
<path d="M991.5 226 Q992 214.2 1004 214.2 V226" stroke="#00e5e5" stroke-width="1.3" fill="none"/>
<path d="M962 251 Q962.5 237 975 236.7" stroke="#00e5e5" stroke-width="1.3" fill="none"/>
<line x1="972" y1="199" x2="978" y2="199" stroke="#00ff00" stroke-width="1.3"/>
<line x1="972" y1="206" x2="978" y2="206" stroke="#00ff00" stroke-width="1.3"/>
<line x1="972" y1="213" x2="978" y2="213" stroke="#00ff00" stroke-width="1.3"/>
<line x1="972" y1="220" x2="978" y2="220" stroke="#00ff00" stroke-width="1.3"/>
<line x1="972" y1="227" x2="978" y2="227" stroke="#00ff00" stroke-width="1.3"/>
<line x1="975" y1="198" x2="975" y2="229" stroke="#00ff00" stroke-width="1.1"/>
<path d="M1041 204 V214 H1043 V222 H1041 V258.2" stroke="#0000e0" stroke-width="1.4" fill="none"/>
<line x1="1043.4" y1="182" x2="1043.4" y2="258" stroke="#00d000" stroke-width="1.1"/>
<path d="M983 198 V210 Q983 214 987 212" stroke="#c83cc8" stroke-width="1.1" fill="none"/>
<path d="M984 218 H988 V228 H984" stroke="#ffff00" stroke-width="1.1" fill="none"/>
<rect x="982" y="232" width="6" height="14" stroke="#5fa8d3" stroke-width="1.1" fill="none"/>
<line x1="929.5" y1="251.7" x2="937" y2="251.7" stroke="#c83cc8" stroke-width="4.3"/>
<line x1="929.5" y1="251.7" x2="937" y2="251.7" stroke="#8c8c8c" stroke-width="2.6"/>
<line x1="937" y1="250.4" x2="960.5" y2="250.4" stroke="#d0d0d0" stroke-width="1.1"/>
<line x1="937" y1="253.2" x2="960.5" y2="253.2" stroke="#d0d0d0" stroke-width="1.1"/>
<line x1="959.7" y1="251" x2="959.7" y2="275" stroke="#d0d0d0" stroke-width="1.2"/>
<line x1="929.5" y1="291.2" x2="960.5" y2="291.2" stroke="#c8c8c8" stroke-width="2.2"/>
<rect x="960.5" y="273.3" width="10.8" height="3.3" stroke="#d8d8d8" stroke-width="1.1" fill="none"/>
<rect x="985.3" y="249.3" width="5.4" height="4.1" stroke="#e0e0e0" stroke-width="1.1" fill="none"/>
<rect x="938.8" y="258.6" width="17.8" height="10.1" stroke="#5fa8d3" stroke-width="1.2" fill="none"/>
<rect x="945" y="262" width="8" height="4" fill="#5fa8d3"/>
<path d="M946.6 290.5 Q947 277.2 959 277.2" stroke="#00e5e5" stroke-width="1.3" fill="none"/>
<path d="M971.3 274.9 Q972 288.8 985.3 288.8 V272" stroke="#00e5e5" stroke-width="1.3" fill="none"/>
<line x1="925" y1="240" x2="934" y2="240" stroke="#00ff00" stroke-width="1.2"/>
<line x1="925" y1="246" x2="934" y2="246" stroke="#00ff00" stroke-width="1.2"/>
<line x1="925" y1="256" x2="936" y2="256" stroke="#00ff00" stroke-width="1.2"/>
<line x1="925" y1="262" x2="936" y2="262" stroke="#00ff00" stroke-width="1.2"/>
<line x1="925" y1="268" x2="936" y2="268" stroke="#00ff00" stroke-width="1.2"/>
<line x1="925" y1="276" x2="934" y2="276" stroke="#00ff00" stroke-width="1.2"/>
<line x1="925" y1="282" x2="934" y2="282" stroke="#00ff00" stroke-width="1.2"/>
<line x1="925" y1="288" x2="934" y2="288" stroke="#00ff00" stroke-width="1.2"/>
<line x1="931.5" y1="236" x2="931.5" y2="290" stroke="#00ff00" stroke-width="1.2"/>
<line x1="935.5" y1="232" x2="935.5" y2="250" stroke="#00ff00" stroke-width="1.2"/>
<path d="M915 243 L920 243 L926 249" stroke="#00ff00" stroke-width="1.2" fill="none"/>
<line x1="926" y1="272" x2="933" y2="272" stroke="#ff0000" stroke-width="1.6"/>
<line x1="933" y1="271.5" x2="938" y2="271.5" stroke="#ffff00" stroke-width="1.4"/>
<line x1="934" y1="256" x2="934" y2="266" stroke="#ffff00" stroke-width="1.2"/>
<path d="M925 251 L921 262 M927 268 L923 276" stroke="#c83cc8" stroke-width="1.2" fill="none"/>
<rect x="930" y="272" width="4" height="8" fill="#00c8e0"/>
<line x1="1007" y1="251.7" x2="1041" y2="251.7" stroke="#c83cc8" stroke-width="4.3"/>
<line x1="1007" y1="251.7" x2="1041" y2="251.7" stroke="#8c8c8c" stroke-width="2.6"/>
<rect x="1011" y="245" width="9.5" height="5.3" fill="#ff00ff"/>
<line x1="959" y1="258.2" x2="1041" y2="258.2" stroke="#0000d8" stroke-width="1.2"/>
<line x1="985" y1="251" x2="985" y2="258" stroke="#0000e0" stroke-width="1.3"/>
<line x1="1041" y1="257" x2="1110" y2="257" stroke="#00ff00" stroke-width="1.2"/>
<line x1="1082" y1="251.5" x2="1100" y2="251.5" stroke="#c83cc8" stroke-width="4.3"/>
<line x1="1082" y1="251.5" x2="1100" y2="251.5" stroke="#8c8c8c" stroke-width="2.6"/>
<path d="M1084.3 234.6 Q1098 235 1098.3 248.6" stroke="#00e5e5" stroke-width="1.3" fill="none"/>
<path d="M1101.4 268.7 Q1115 268 1115.3 256.3" stroke="#00e5e5" stroke-width="1.3" fill="none"/>
<line x1="989" y1="272" x2="989" y2="354" stroke="#c83cc8" stroke-width="4.3"/>
<line x1="989" y1="272" x2="989" y2="354" stroke="#8c8c8c" stroke-width="2.6"/>
<line x1="1099.8" y1="270" x2="1099.8" y2="340" stroke="#c83cc8" stroke-width="4.3"/>
<line x1="1099.8" y1="270" x2="1099.8" y2="340" stroke="#8c8c8c" stroke-width="2.6"/>
<line x1="1098.6" y1="340" x2="1098.6" y2="356" stroke="#d8d8d8" stroke-width="1.1"/>
<line x1="1101" y1="340" x2="1101" y2="356" stroke="#d8d8d8" stroke-width="1.1"/>
<line x1="991.5" y1="274" x2="1031" y2="274" stroke="#00e5e5" stroke-width="1.3"/>
<line x1="1019" y1="274" x2="1027" y2="274" stroke="#00e5e5" stroke-width="2.2"/>
<line x1="1031" y1="274" x2="1031" y2="339" stroke="#00e5e5" stroke-width="1.3"/>
<line x1="1031" y1="292" x2="1031" y2="316.7" stroke="#00e5e5" stroke-width="2.6"/>
<line x1="989" y1="339.3" x2="999" y2="339.3" stroke="#c83cc8" stroke-width="4.3"/>
<line x1="989" y1="339.3" x2="999" y2="339.3" stroke="#8c8c8c" stroke-width="2.6"/>
<line x1="1089" y1="339.3" x2="1100" y2="339.3" stroke="#c83cc8" stroke-width="4.3"/>
<line x1="1089" y1="339.3" x2="1100" y2="339.3" stroke="#8c8c8c" stroke-width="2.6"/>
<line x1="999" y1="338.4" x2="1089" y2="338.4" stroke="#00a8a8" stroke-width="1.2"/>
<line x1="999" y1="340.4" x2="1089" y2="340.4" stroke="#00a8a8" stroke-width="1.2"/>
<rect x="1028.6" y="337.2" width="17.8" height="4.4" stroke="#d8d8d8" stroke-width="1.2" fill="none" rx="2"/>
<line x1="929.8" y1="292" x2="929.8" y2="366" stroke="#b8b8b8" stroke-width="2"/>
<line x1="927.8" y1="318" x2="927.8" y2="366" stroke="#c83cc8" stroke-width="1.2"/>
<line x1="931" y1="352.3" x2="942" y2="352.3" stroke="#c83cc8" stroke-width="2.2"/>
<line x1="942" y1="352.2" x2="987" y2="352.2" stroke="#00e5e5" stroke-width="1.4"/>
<line x1="931" y1="366.6" x2="942" y2="366.6" stroke="#c83cc8" stroke-width="2.2"/>
<line x1="942" y1="366.9" x2="980" y2="366.9" stroke="#00e5e5" stroke-width="1.4"/>
<line x1="980.6" y1="367.3" x2="1103" y2="367.3" stroke="#c83cc8" stroke-width="1.5"/>
<rect x="1084" y="364" width="19" height="4.6" stroke="#e0e0e0" stroke-width="1.2" fill="none" rx="2"/>
<path d="M1098.5 356 V364" stroke=" #e0e0e0" stroke-width="1.2" fill="none"/>
<path d="M980 371 Q990 376 998 371" stroke="#c83cc8" stroke-width="1.1" fill="none"/>
<path d="M1088 371 Q1096 376 1104 371" stroke="#c83cc8" stroke-width="1.1" fill="none"/>
<line x1="1112" y1="351.7" x2="1126" y2="351.7" stroke="#00e5e5" stroke-width="2.4"/>
<line x1="1104.5" y1="339" x2="1126" y2="339" stroke="#00a8a8" stroke-width="1.6"/>
<rect x="1100" y="349" width="13" height="4" stroke="#e0e0e0" stroke-width="1.1" fill="none"/>
<line x1="984" y1="355" x2="984" y2="366" stroke="#00ff00" stroke-width="1.2"/>
<line x1="987" y1="355" x2="987" y2="366" stroke="#00ff00" stroke-width="1.2"/>
<line x1="990" y1="355" x2="990" y2="366" stroke="#00ff00" stroke-width="1.2"/>
<line x1="993" y1="355" x2="993" y2="366" stroke="#00ff00" stroke-width="1.2"/>
<line x1="982" y1="360" x2="995" y2="360" stroke="#00ff00" stroke-width="1.3"/>
<line x1="994.5" y1="366" x2="994.5" y2="380" stroke="#00ff00" stroke-width="1.2"/>
<rect x="993" y="375" width="4" height="8" fill="#00ff00"/>
<rect x="981" y="356" width="2.5" height="3" fill="#fff"/>
<rect x="995" y="361" width="2.5" height="3" fill="#fff"/>
<rect x="948.5" y="317.2" width="1.6" height="1.6" fill="#fff"/>
<rect x="1013.1" y="317.2" width="1.6" height="1.6" fill="#fff"/>
<rect x="1078.9" y="317.2" width="1.6" height="1.6" fill="#fff"/>
<rect x="952.2" y="359.2" width="1.6" height="1.6" fill="#fff"/>
<rect x="1032.2" y="361.2" width="1.6" height="1.6" fill="#fff"/>
<rect x="944.2" y="221.2" width="1.6" height="1.6" fill="#fff"/>
<rect x="1042.2" y="330.2" width="1.6" height="1.6" fill="#fff"/>
<rect x="958" y="255" width="4" height="2" fill="#e8e8e8"/>
<rect x="966" y="261" width="4" height="2" fill="#e8e8e8"/>
<rect x="1010" y="261" width="4" height="2" fill="#e8e8e8"/>
<rect x="1020" y="255" width="4" height="2" fill="#e8e8e8"/>
<rect x="1062" y="255" width="4" height="2" fill="#e8e8e8"/>
<rect x="1070" y="259" width="4" height="2" fill="#e8e8e8"/>
<line x1="1057.9" y1="266" x2="1067" y2="266" stroke="#ff0000" stroke-width="1.8"/>
<path d="M1106 352 V334 H1110" stroke="#00ff00" stroke-width="1.2" fill="none"/>
</g>
<g id="center">
<path d="M1076.4 120.5 H1247 V144 H1284.5 V160" stroke="#34347a" stroke-width="1.1" fill="none"/>
<line x1="1083" y1="129.6" x2="1083" y2="228" stroke="#c83cc8" stroke-width="4.3"/>
<line x1="1083" y1="129.6" x2="1083" y2="228" stroke="#8c8c8c" stroke-width="2.6"/>
<line x1="1230.5" y1="151" x2="1230.5" y2="229" stroke="#c83cc8" stroke-width="4.3"/>
<line x1="1230.5" y1="151" x2="1230.5" y2="229" stroke="#8c8c8c" stroke-width="2.6"/>
<line x1="1083" y1="129.8" x2="1099.5" y2="129.8" stroke="#c83cc8" stroke-width="4.3"/>
<line x1="1083" y1="129.8" x2="1099.5" y2="129.8" stroke="#8c8c8c" stroke-width="2.6"/>
<line x1="1099.5" y1="128.8" x2="1118.8" y2="128.8" stroke="#00e5e5" stroke-width="1.3"/>
<line x1="1099.5" y1="131" x2="1118.8" y2="131" stroke="#00e5e5" stroke-width="1.3"/>
<line x1="1118.8" y1="130" x2="1176" y2="130" stroke="#d8d8d8" stroke-width="2.2"/>
<line x1="1176" y1="128.8" x2="1196" y2="128.8" stroke="#00e5e5" stroke-width="1.3"/>
<line x1="1176" y1="131" x2="1196" y2="131" stroke="#00e5e5" stroke-width="1.3"/>
<line x1="1196" y1="129.8" x2="1202" y2="129.8" stroke="#c83cc8" stroke-width="4.3"/>
<line x1="1196" y1="129.8" x2="1202" y2="129.8" stroke="#8c8c8c" stroke-width="2.6"/>
<line x1="1202" y1="129.8" x2="1224" y2="129.8" stroke="#c83cc8" stroke-width="1.4"/>
<rect x="1224" y="127.8" width="17" height="4.8" stroke="#e0e0e0" stroke-width="1.2" fill="none"/>
<path d="M1079 129 V125 Q1079 123 1082 123 H1095 Q1098 124 1098.5 127" stroke="#c83cc8" stroke-width="1.1" fill="none"/>
<path d="M1226 126 Q1228 121.5 1234 121.5 H1240 Q1246 123 1246 128" stroke="#c83cc8" stroke-width="1.1" fill="none"/>
<path d="M1246 132 Q1244 140 1240 146" stroke="#c83cc8" stroke-width="1.1" fill="none"/>
<line x1="1201" y1="129.8" x2="1201" y2="156" stroke="#c83cc8" stroke-width="4.3"/>
<line x1="1201" y1="129.8" x2="1201" y2="156" stroke="#8c8c8c" stroke-width="2.6"/>
<line x1="1239.2" y1="131" x2="1239.2" y2="151" stroke="#d8d8d8" stroke-width="1.1"/>
<line x1="1241.4" y1="131" x2="1241.4" y2="151" stroke="#d8d8d8" stroke-width="1.1"/>
<line x1="1201" y1="151" x2="1207.8" y2="151" stroke="#c83cc8" stroke-width="3.4"/>
<line x1="1207.8" y1="150.2" x2="1225.6" y2="150.2" stroke="#00e5e5" stroke-width="1.2"/>
<line x1="1207.8" y1="152.2" x2="1225.6" y2="152.2" stroke="#00e5e5" stroke-width="1.2"/>
<line x1="1225.6" y1="151" x2="1241" y2="151" stroke="#c83cc8" stroke-width="1.5"/>
<line x1="1225.6" y1="151" x2="1233" y2="151" stroke="#c83cc8" stroke-width="4.3"/>
<line x1="1225.6" y1="151" x2="1233" y2="151" stroke="#8c8c8c" stroke-width="2.6"/>
<line x1="1230.6" y1="131" x2="1230.6" y2="145" stroke="#707070" stroke-width="2.2"/>
<path d="M1231.3 100 V118 Q1235 118 1235 122 V140" stroke="#00ff00" stroke-width="1.3" fill="none"/>
<line x1="1235.6" y1="134" x2="1235.6" y2="140" stroke="#00e5e5" stroke-width="1.4"/>
<rect x="1208" y="133" width="4" height="3" fill="#e8e8e8"/>
<line x1="1105.5" y1="131.5" x2="1105.5" y2="150.3" stroke="#ffff00" stroke-width="1.5"/>
<line x1="1105.5" y1="152.8" x2="1105.5" y2="172" stroke="#ffff00" stroke-width="1.5"/>
<line x1="1108.6" y1="131.5" x2="1108.6" y2="150.3" stroke="#ffff00" stroke-width="1.5"/>
<line x1="1108.6" y1="152.8" x2="1108.6" y2="172" stroke="#ffff00" stroke-width="1.5"/>
<line x1="1111.7" y1="131.5" x2="1111.7" y2="150.3" stroke="#ffff00" stroke-width="1.5"/>
<line x1="1111.7" y1="152.8" x2="1111.7" y2="172" stroke="#ffff00" stroke-width="1.5"/>
<line x1="1114.8" y1="131.5" x2="1114.8" y2="150.3" stroke="#ffff00" stroke-width="1.5"/>
<line x1="1114.8" y1="152.8" x2="1114.8" y2="172" stroke="#ffff00" stroke-width="1.5"/>
<line x1="1117.9" y1="131.5" x2="1117.9" y2="150.3" stroke="#ffff00" stroke-width="1.5"/>
<line x1="1117.9" y1="152.8" x2="1117.9" y2="172" stroke="#ffff00" stroke-width="1.5"/>
<line x1="1121" y1="131.5" x2="1121" y2="150.3" stroke="#ffff00" stroke-width="1.5"/>
<line x1="1121" y1="152.8" x2="1121" y2="172" stroke="#ffff00" stroke-width="1.5"/>
<line x1="1124.1" y1="131.5" x2="1124.1" y2="150.3" stroke="#ffff00" stroke-width="1.5"/>
<line x1="1124.1" y1="152.8" x2="1124.1" y2="172" stroke="#ffff00" stroke-width="1.5"/>
<line x1="1127.2" y1="131.5" x2="1127.2" y2="150.3" stroke="#ffff00" stroke-width="1.5"/>
<line x1="1127.2" y1="152.8" x2="1127.2" y2="172" stroke="#ffff00" stroke-width="1.5"/>
<line x1="1130.3" y1="131.5" x2="1130.3" y2="150.3" stroke="#ffff00" stroke-width="1.5"/>
<line x1="1130.3" y1="152.8" x2="1130.3" y2="172" stroke="#ffff00" stroke-width="1.5"/>
<line x1="1133.4" y1="131.5" x2="1133.4" y2="150.3" stroke="#ffff00" stroke-width="1.5"/>
<line x1="1133.4" y1="152.8" x2="1133.4" y2="172" stroke="#ffff00" stroke-width="1.5"/>
<line x1="1136.5" y1="131.5" x2="1136.5" y2="150.3" stroke="#ffff00" stroke-width="1.5"/>
<line x1="1136.5" y1="152.8" x2="1136.5" y2="172" stroke="#ffff00" stroke-width="1.5"/>
<line x1="1139.6" y1="131.5" x2="1139.6" y2="150.3" stroke="#ffff00" stroke-width="1.5"/>
<line x1="1139.6" y1="152.8" x2="1139.6" y2="172" stroke="#ffff00" stroke-width="1.5"/>
<line x1="1142.7" y1="131.5" x2="1142.7" y2="150.3" stroke="#ffff00" stroke-width="1.5"/>
<line x1="1142.7" y1="152.8" x2="1142.7" y2="172" stroke="#ffff00" stroke-width="1.5"/>
<line x1="1145.8" y1="131.5" x2="1145.8" y2="150.3" stroke="#ffff00" stroke-width="1.5"/>
<line x1="1145.8" y1="152.8" x2="1145.8" y2="172" stroke="#ffff00" stroke-width="1.5"/>
<line x1="1148.9" y1="131.5" x2="1148.9" y2="150.3" stroke="#ffff00" stroke-width="1.5"/>
<line x1="1148.9" y1="152.8" x2="1148.9" y2="172" stroke="#ffff00" stroke-width="1.5"/>
<line x1="1152" y1="131.5" x2="1152" y2="150.3" stroke="#ffff00" stroke-width="1.5"/>
<line x1="1152" y1="152.8" x2="1152" y2="172" stroke="#ffff00" stroke-width="1.5"/>
<line x1="1155.1" y1="131.5" x2="1155.1" y2="150.3" stroke="#9c9c00" stroke-width="1.5"/>
<line x1="1155.1" y1="152.8" x2="1155.1" y2="172" stroke="#9c9c00" stroke-width="1.5"/>
<line x1="1158.2" y1="131.5" x2="1158.2" y2="150.3" stroke="#9c9c00" stroke-width="1.5"/>
<line x1="1158.2" y1="152.8" x2="1158.2" y2="172" stroke="#9c9c00" stroke-width="1.5"/>
<line x1="1161.3" y1="131.5" x2="1161.3" y2="150.3" stroke="#9c9c00" stroke-width="1.5"/>
<line x1="1161.3" y1="152.8" x2="1161.3" y2="172" stroke="#9c9c00" stroke-width="1.5"/>
<line x1="1164.4" y1="131.5" x2="1164.4" y2="150.3" stroke="#9c9c00" stroke-width="1.5"/>
<line x1="1164.4" y1="152.8" x2="1164.4" y2="172" stroke="#9c9c00" stroke-width="1.5"/>
<line x1="1167.5" y1="131.5" x2="1167.5" y2="150.3" stroke="#9c9c00" stroke-width="1.5"/>
<line x1="1167.5" y1="152.8" x2="1167.5" y2="172" stroke="#9c9c00" stroke-width="1.5"/>
<line x1="1170.6" y1="131.5" x2="1170.6" y2="150.3" stroke="#9c9c00" stroke-width="1.5"/>
<line x1="1170.6" y1="152.8" x2="1170.6" y2="172" stroke="#9c9c00" stroke-width="1.5"/>
<line x1="1173.7" y1="131.5" x2="1173.7" y2="150.3" stroke="#9c9c00" stroke-width="1.5"/>
<line x1="1173.7" y1="152.8" x2="1173.7" y2="172" stroke="#9c9c00" stroke-width="1.5"/>
<line x1="1176.8" y1="131.5" x2="1176.8" y2="150.3" stroke="#9c9c00" stroke-width="1.5"/>
<line x1="1176.8" y1="152.8" x2="1176.8" y2="172" stroke="#9c9c00" stroke-width="1.5"/>
<line x1="1179.9" y1="131.5" x2="1179.9" y2="150.3" stroke="#9c9c00" stroke-width="1.5"/>
<line x1="1179.9" y1="152.8" x2="1179.9" y2="172" stroke="#9c9c00" stroke-width="1.5"/>
<line x1="1104" y1="151.5" x2="1180" y2="151.5" stroke="#d0d0d0" stroke-width="2"/>
<line x1="1104" y1="141" x2="1179" y2="141" stroke="#00c000" stroke-width="1.6" opacity="0.75"/>
<line x1="1104" y1="163" x2="1179" y2="163" stroke="#00c000" stroke-width="1.6" opacity="0.75"/>
<path d="M1137.4 133 L1146.7 170" stroke="#ffff00" stroke-width="2.6" fill="none"/>
<path d="M1105 131 A17 20.5 0 0 0 1105 172" stroke="#ffff00" stroke-width="1.4" fill="none" stroke-dasharray="4 2.5"/>
<path d="M1179.5 131 A19 20.5 0 0 1 1179.5 172" stroke="#ffff00" stroke-width="1.4" fill="none" stroke-dasharray="4 2.5"/>
<path d="M1088.6 159.2 Q1100 159 1101.8 169.6" stroke="#00e5e5" stroke-width="1.3" fill="none"/>
<path d="M1185.4 165.7 Q1186 155 1197.8 154.9" stroke="#00e5e5" stroke-width="1.3" fill="none"/>
<path d="M1060 168 Q1061 160 1068 160 Q1074 160 1074 168" stroke="#00e5e5" stroke-width="0" fill="none"/>
<line x1="1118.8" y1="174.2" x2="1202.4" y2="174.2" stroke="#c83cc8" stroke-width="4.3"/>
<line x1="1118.8" y1="174.2" x2="1202.4" y2="174.2" stroke="#8c8c8c" stroke-width="2.6"/>
<line x1="1119.2" y1="174.2" x2="1119.2" y2="211" stroke="#c83cc8" stroke-width="4.3"/>
<line x1="1119.2" y1="174.2" x2="1119.2" y2="211" stroke="#8c8c8c" stroke-width="2.6"/>
<line x1="1201.8" y1="174.2" x2="1201.8" y2="211" stroke="#c83cc8" stroke-width="4.3"/>
<line x1="1201.8" y1="174.2" x2="1201.8" y2="211" stroke="#8c8c8c" stroke-width="2.6"/>
<line x1="1119" y1="210.8" x2="1202" y2="210.8" stroke="#c83cc8" stroke-width="4.3"/>
<line x1="1119" y1="210.8" x2="1202" y2="210.8" stroke="#8c8c8c" stroke-width="2.6"/>
<line x1="1162" y1="176" x2="1162" y2="209" stroke="#d8d8d8" stroke-width="1.1"/>
<line x1="1164.2" y1="176" x2="1164.2" y2="209" stroke="#d8d8d8" stroke-width="1.1"/>
<rect x="1125.8" y="180.4" width="25.5" height="24" stroke="#ffff00" stroke-width="1.6" fill="none"/>
<path d="M1125.8 180.4 L1151.3 204.4 M1151.3 180.4 L1125.8 204.4" stroke="#ffff00" stroke-width="1.5" fill="none"/>
<rect x="1173.8" y="180.4" width="22.4" height="24" stroke="#ffff00" stroke-width="1.6" fill="none"/>
<path d="M1173.8 180.4 L1196.2 204.4 M1196.2 180.4 L1173.8 204.4" stroke="#ffff00" stroke-width="1.5" fill="none"/>
<rect x="1155.8" y="184" width="2.6" height="18" stroke="#ffff00" stroke-width="1.2" fill="none" rx="1.2"/>
<rect x="1168.2" y="184" width="2.6" height="18" stroke="#ffff00" stroke-width="1.2" fill="none" rx="1.2"/>
<line x1="1122.3" y1="182.8" x2="1122.3" y2="201.3" stroke="#00e5e5" stroke-width="1.6"/>
<line x1="1199" y1="182.8" x2="1199" y2="201.3" stroke="#00e5e5" stroke-width="1.6"/>
<rect x="1104" y="174.2" width="11.7" height="3.8" fill="#ff0000"/>
<rect x="1073" y="172.6" width="14" height="3.4" stroke="#e0e0e0" stroke-width="1.1" fill="none"/>
<path d="M1103 183 H1108 L1113 179" stroke="#e8e8e8" stroke-width="1.2" fill="none"/>
<path d="M1101 172 H1116 M1103 168 V176 M1114 168 V176" stroke="#00ff00" stroke-width="1.3" fill="none"/>
<rect x="1091" y="189" width="4" height="4" fill="#e8e8e8"/>
<line x1="1202" y1="174.5" x2="1232" y2="174.5" stroke="#767676" stroke-width="1.1"/>
<line x1="1204" y1="207" x2="1210" y2="204" stroke="#e0e0e0" stroke-width="1"/>
<line x1="1204.4" y1="204" x2="1210.4" y2="201" stroke="#e0e0e0" stroke-width="1"/>
<line x1="1204.8" y1="201" x2="1210.8" y2="198" stroke="#e0e0e0" stroke-width="1"/>
<line x1="1205.2" y1="198" x2="1211.2" y2="195" stroke="#e0e0e0" stroke-width="1"/>
<line x1="1205.6" y1="195" x2="1211.6" y2="192" stroke="#e0e0e0" stroke-width="1"/>
<line x1="1206" y1="192" x2="1212" y2="189" stroke="#e0e0e0" stroke-width="1"/>
<rect x="1204.7" y="169.2" width="1.6" height="1.6" fill="#fff"/>
<rect x="1206.2" y="194.2" width="1.6" height="1.6" fill="#fff"/>
<rect x="1221.2" y="201.2" width="1.6" height="1.6" fill="#fff"/>
<rect x="1227.2" y="185.2" width="1.6" height="1.6" fill="#fff"/>
<rect x="1094.2" y="195.2" width="1.6" height="1.6" fill="#fff"/>
<rect x="1099.2" y="140.2" width="1.6" height="1.6" fill="#fff"/>
<rect x="1181.2" y="142.2" width="1.6" height="1.6" fill="#fff"/>
<rect x="1181.2" y="163.2" width="1.6" height="1.6" fill="#fff"/>
<rect x="1099.2" y="159.2" width="1.6" height="1.6" fill="#fff"/>
<line x1="1109" y1="213.2" x2="1162.4" y2="213.2" stroke="#c8c8c8" stroke-width="1.2"/>
<line x1="1104" y1="226.6" x2="1228" y2="226.6" stroke="#9a9a9a" stroke-width="1.2"/>
<line x1="1109" y1="213.2" x2="1109" y2="226.6" stroke="#c8c8c8" stroke-width="1.2"/>
<line x1="1126" y1="213.2" x2="1126" y2="226.6" stroke="#c8c8c8" stroke-width="1.2"/>
<line x1="1128.3" y1="213.2" x2="1128.3" y2="226.6" stroke="#c8c8c8" stroke-width="1.2"/>
<line x1="1162.4" y1="213.2" x2="1162.4" y2="226.6" stroke="#c8c8c8" stroke-width="1.2"/>
<line x1="1108" y1="211" x2="1108" y2="228" stroke="#767676" stroke-width="1.2"/>
<path d="M1085.7 210.8 Q1096 212 1100 222 L1102 219 L1104.3 224.8" stroke="#00e5e5" stroke-width="1.3" fill="none"/>
<path d="M1228 210.8 Q1216 212 1214 224" stroke="#00e5e5" stroke-width="1.3" fill="none"/>
<path d="M1196.4 219.5 L1202.8 215 V224 Z" stroke="#ff0000" stroke-width="1" fill="#ff0000"/>
<path d="M1183 229 V217 H1192 M1187 217 V229 M1179 222 H1198" stroke="#00ff00" stroke-width="1.4" fill="none"/>
<path d="M1179 217 Q1176 221 1181 223" stroke="#e0e0e0" stroke-width="1.1" fill="none"/>
<line x1="1203" y1="223.5" x2="1226" y2="223.5" stroke="#e0e0e0" stroke-width="1.1"/>
<rect x="1204" y="218.5" width="14" height="2" fill="#e0e0e0"/>
<rect x="1112" y="216" width="1.5" height="5" fill="#e8e8e8"/>
<path d="M1137 216 L1140 219 L1137 222 Z" stroke="#e8e8e8" stroke-width="0.5" fill="#e8e8e8"/>
<rect x="1167" y="217.5" width="3" height="3" fill="#e8e8e8"/>
<line x1="1044" y1="231" x2="1270.5" y2="231" stroke="#00a800" stroke-width="2.3"/>
<line x1="1100" y1="257.3" x2="1273.5" y2="257.3" stroke="#00ff00" stroke-width="1.2"/>
<path d="M1083.4 232 Q1096 233 1096.6 246.4" stroke="#00e5e5" stroke-width="1.3" fill="none"/>
<path d="M1231 232 Q1218.5 233 1218 246.4" stroke="#00e5e5" stroke-width="1.3" fill="none"/>
<line x1="1082" y1="251" x2="1232.8" y2="251" stroke="#8c8c8c" stroke-width="3"/>
<line x1="1082" y1="251" x2="1100" y2="251" stroke="#c83cc8" stroke-width="4.6"/>
<line x1="1082" y1="251" x2="1100" y2="251" stroke="#8c8c8c" stroke-width="2.6"/>
<line x1="1214" y1="251" x2="1232.8" y2="251" stroke="#c83cc8" stroke-width="4.6"/>
<line x1="1214" y1="251" x2="1232.8" y2="251" stroke="#8c8c8c" stroke-width="2.6"/>
<line x1="1100.4" y1="265" x2="1100.4" y2="340" stroke="#c83cc8" stroke-width="4.3"/>
<line x1="1100.4" y1="265" x2="1100.4" y2="340" stroke="#8c8c8c" stroke-width="2.6"/>
<line x1="1214.2" y1="265" x2="1214.2" y2="340" stroke="#c83cc8" stroke-width="4.3"/>
<line x1="1214.2" y1="265" x2="1214.2" y2="340" stroke="#8c8c8c" stroke-width="2.6"/>
<line x1="1099.2" y1="340" x2="1099.2" y2="353" stroke="#d8d8d8" stroke-width="1.1"/>
<line x1="1101.6" y1="340" x2="1101.6" y2="353" stroke="#d8d8d8" stroke-width="1.1"/>
<line x1="1213" y1="340" x2="1213" y2="353" stroke="#d8d8d8" stroke-width="1.1"/>
<line x1="1215.4" y1="340" x2="1215.4" y2="353" stroke="#d8d8d8" stroke-width="1.1"/>
<line x1="1156" y1="252" x2="1156" y2="352" stroke="#d8d8d8" stroke-width="1.1"/>
<line x1="1158.4" y1="252" x2="1158.4" y2="352" stroke="#d8d8d8" stroke-width="1.1"/>
<path d="M1118.2 253.4 V269.7 H1140 V275 M1196.4 253.4 V269.7 H1174.5 V275" stroke="#e8e8e8" stroke-width="1.3" fill="none"/>
<ellipse cx="1127.5" cy="259.5" rx="6.5" ry="4" fill="#3d7ea8" stroke="#5fa8d3" stroke-width="1"/>
<ellipse cx="1187" cy="259.5" rx="6.5" ry="4" fill="#3d7ea8" stroke="#5fa8d3" stroke-width="1"/>
<ellipse cx="1141.5" cy="260" rx="3" ry="4.5" fill="#3d7ea8"/>
<ellipse cx="1173" cy="260" rx="3" ry="4.5" fill="#3d7ea8"/>
<path d="M1126 256 V264 M1131 262 V267 H1142 V256 M1136 256 V266" stroke="#ffff00" stroke-width="1.3" fill="none"/>
<path d="M1188.5 256 V264 M1183.5 262 V267 H1172.5 V256 M1178.5 256 V266" stroke="#ffff00" stroke-width="1.3" fill="none"/>
<path d="M1149 256 V272 Q1149 278 1153.5 279 M1165.5 256 V272 Q1165.5 278 1161 279" stroke="#ffff00" stroke-width="1.4" fill="none"/>
<path d="M1150 262 H1164.5" stroke="#ffff00" stroke-width="1.2" fill="none"/>
<line x1="1154.2" y1="256" x2="1154.2" y2="279" stroke="#0000e0" stroke-width="1.6"/>
<line x1="1160.3" y1="256" x2="1160.3" y2="279" stroke="#0000e0" stroke-width="1.6"/>
<line x1="1150" y1="270.5" x2="1164.5" y2="270.5" stroke="#c83cc8" stroke-width="1.3"/>
<rect x="1155.5" y="253" width="3.5" height="9" fill="#f0f0f0"/>
<line x1="1118" y1="246" x2="1118" y2="256" stroke="#00ff00" stroke-width="1.2"/>
<line x1="1124" y1="246" x2="1124" y2="256" stroke="#00ff00" stroke-width="1.2"/>
<line x1="1131" y1="246" x2="1131" y2="256" stroke="#00ff00" stroke-width="1.2"/>
<line x1="1142" y1="246" x2="1142" y2="256" stroke="#00ff00" stroke-width="1.2"/>
<line x1="1148" y1="246" x2="1148" y2="256" stroke="#00ff00" stroke-width="1.2"/>
<line x1="1152" y1="246" x2="1152" y2="256" stroke="#00ff00" stroke-width="1.2"/>
<line x1="1157.2" y1="246" x2="1157.2" y2="256" stroke="#00ff00" stroke-width="1.2"/>
<line x1="1162" y1="246" x2="1162" y2="256" stroke="#00ff00" stroke-width="1.2"/>
<line x1="1166" y1="246" x2="1166" y2="256" stroke="#00ff00" stroke-width="1.2"/>
<line x1="1172" y1="246" x2="1172" y2="256" stroke="#00ff00" stroke-width="1.2"/>
<line x1="1183" y1="246" x2="1183" y2="256" stroke="#00ff00" stroke-width="1.2"/>
<line x1="1190" y1="246" x2="1190" y2="256" stroke="#00ff00" stroke-width="1.2"/>
<line x1="1196" y1="246" x2="1196" y2="256" stroke="#00ff00" stroke-width="1.2"/>
<line x1="1117" y1="249.5" x2="1200" y2="249.5" stroke="#00ff00" stroke-width="1.3"/>
<path d="M1109 246 L1117 246 L1121 254 M1205 250 L1197 254" stroke="#00ff00" stroke-width="1.3" fill="none"/>
<line x1="1146" y1="233" x2="1154" y2="233" stroke="#00ff00" stroke-width="1.2"/>
<line x1="1146" y1="236" x2="1154" y2="236" stroke="#00ff00" stroke-width="1.2"/>
<line x1="1146" y1="239" x2="1154" y2="239" stroke="#00ff00" stroke-width="1.2"/>
<line x1="1146" y1="242" x2="1154" y2="242" stroke="#00ff00" stroke-width="1.2"/>
<line x1="1162" y1="233" x2="1170" y2="233" stroke="#00ff00" stroke-width="1.2"/>
<line x1="1162" y1="236" x2="1170" y2="236" stroke="#00ff00" stroke-width="1.2"/>
<line x1="1162" y1="239" x2="1170" y2="239" stroke="#00ff00" stroke-width="1.2"/>
<line x1="1162" y1="242" x2="1170" y2="242" stroke="#00ff00" stroke-width="1.2"/>
<line x1="1157.2" y1="232" x2="1157.2" y2="258" stroke="#00ff00" stroke-width="1.3"/>
<path d="M1148 284 L1153 280 M1166 284 L1161 280 M1152 284 L1155 292 M1162 284 L1159 292 M1157.2 280 V294" stroke="#00ff00" stroke-width="1.3" fill="none"/>
<line x1="1119" y1="284.4" x2="1195.6" y2="284.4" stroke="#f0f0f0" stroke-width="2"/>
<circle cx="1119" cy="284.4" r="1.3" stroke="#f0f0f0" stroke-width="1" fill="none"/>
<circle cx="1195.6" cy="284.4" r="1.3" stroke="#f0f0f0" stroke-width="1" fill="none"/>
<path d="M1109 268 Q1116 267 1116.7 258.8" stroke="#00e5e5" stroke-width="1.3" fill="none"/>
<path d="M1205.5 268 Q1198.5 267 1197.8 258.8" stroke="#00e5e5" stroke-width="1.3" fill="none"/>
<path d="M1122 271 Q1130 272 1131 281" stroke="#00e5e5" stroke-width="1.3" fill="none"/>
<path d="M1192.5 271 Q1184.5 272 1183.5 281" stroke="#00e5e5" stroke-width="1.3" fill="none"/>
<path d="M1120 270 H1128 V273 M1194.5 270 H1186.5 V273" stroke="#e8e8e8" stroke-width="1.6" fill="none"/>
<rect x="1137" y="279" width="2" height="2" fill="#f0f0f0"/>
<rect x="1176" y="279" width="2" height="2" fill="#f0f0f0"/>
<rect x="1127" y="317.5" width="2" height="2" fill="#f0f0f0"/>
<rect x="1177" y="317.5" width="2" height="2" fill="#f0f0f0"/>
<rect x="1127" y="345" width="2" height="2" fill="#f0f0f0"/>
<rect x="1177" y="345" width="2" height="2" fill="#f0f0f0"/>
<line x1="1104" y1="336.8" x2="1210" y2="336.8" stroke="#00a0a0" stroke-width="1.2"/>
<line x1="1104" y1="338.6" x2="1210" y2="338.6" stroke="#00a0a0" stroke-width="1.2"/>
<line x1="1089" y1="339.3" x2="1104.5" y2="339.3" stroke="#c83cc8" stroke-width="4.3"/>
<line x1="1089" y1="339.3" x2="1104.5" y2="339.3" stroke="#8c8c8c" stroke-width="2.6"/>
<line x1="1210" y1="339.3" x2="1225.5" y2="339.3" stroke="#c83cc8" stroke-width="4.3"/>
<line x1="1210" y1="339.3" x2="1225.5" y2="339.3" stroke="#8c8c8c" stroke-width="2.6"/>
<line x1="1112.8" y1="351.6" x2="1146" y2="351.6" stroke="#00e5e5" stroke-width="2.4"/>
<line x1="1168.5" y1="351.6" x2="1201.8" y2="351.6" stroke="#00e5e5" stroke-width="2.4"/>
<rect x="1146" y="349.6" width="22.5" height="4.2" stroke="#e0e0e0" stroke-width="1.2" fill="none" rx="2"/>
<rect x="1100.5" y="349.6" width="12.3" height="4.2" stroke="#e0e0e0" stroke-width="1.1" fill="none"/>
<rect x="1201.8" y="349.6" width="12.2" height="4.2" stroke="#e0e0e0" stroke-width="1.1" fill="none"/>
<path d="M1148 354 Q1157 362 1167 354" stroke="#c83cc8" stroke-width="1.1" fill="none"/>
<path d="M1108 374.4 V357.3 H1145 V359.2 H1170 V357.3 H1206.5 V374.4" stroke="#34347a" stroke-width="1.1" fill="none"/>
<line x1="1106" y1="334" x2="1106" y2="352" stroke="#00ff00" stroke-width="1.2"/>
<line x1="1208.5" y1="334" x2="1208.5" y2="352" stroke="#00ff00" stroke-width="1.2"/>
</g>
<g id="annot">
<rect x="930" y="318.8" width="49" height="47.6" stroke="#b03030" stroke-width="1.3" fill="none"/>
<line x1="856.3" y1="318.6" x2="930" y2="318.6" stroke="#008000" stroke-width="1.2"/>
<line x1="856.3" y1="366.5" x2="930" y2="366.5" stroke="#008000" stroke-width="1.2"/>
<line x1="881.8" y1="318.6" x2="881.8" y2="366.5" stroke="#008000" stroke-width="1.2"/>
<line x1="929.4" y1="366.4" x2="929.4" y2="414" stroke="#008000" stroke-width="1.2"/>
<line x1="979" y1="366.4" x2="979" y2="414.4" stroke="#008000" stroke-width="1.2"/>
<line x1="929" y1="414" x2="979" y2="414" stroke="#008000" stroke-width="1.2"/>
<polygon points="855.7,323.2 851.1,331.2 843.1,335.8 833.9,335.8 825.9,331.2 821.3,323.2 821.3,314 825.9,306 833.9,301.4 843.1,301.4 851.1,306 855.7,314" fill="none" stroke="#008000" stroke-width="1.2"/>
<polygon points="855.7,371.2 851.1,379.2 843.1,383.8 833.9,383.8 825.9,379.2 821.3,371.2 821.3,362 825.9,354 833.9,349.4 843.1,349.4 851.1,354 855.7,362" fill="none" stroke="#008000" stroke-width="1.2"/>
<polygon points="945.8,461.1 941.2,469.1 933.2,473.7 924,473.7 916,469.1 911.4,461.1 911.4,451.9 916,443.9 924,439.3 933.2,439.3 941.2,443.9 945.8,451.9" fill="none" stroke="#008000" stroke-width="1.2"/>
<polygon points="994.6,461.1 990,469.1 982,473.7 972.8,473.7 964.8,469.1 960.2,461.1 960.2,451.9 964.8,443.9 972.8,439.3 982,439.3 990,443.9 994.6,451.9" fill="none" stroke="#008000" stroke-width="1.2"/>
<text x="838.5" y="327.6" font-size="24.5" fill="#f0f0f0" font-family="'DejaVu Sans',sans-serif" font-weight="200" text-anchor="middle" stroke="#f0f0f0" stroke-width="0.55">B</text>
<text x="839" y="376" font-size="25" fill="#f0f0f0" font-family="'DejaVu Sans',sans-serif" font-weight="200" text-anchor="middle" stroke="#f0f0f0" stroke-width="0.55">A</text>
<text x="928.6" y="467" font-size="26" fill="#f0f0f0" font-family="'DejaVu Sans',sans-serif" font-weight="200" text-anchor="middle" stroke="#f0f0f0" stroke-width="0.55">1</text>
<text x="977.4" y="467" font-size="26" fill="#f0f0f0" font-family="'DejaVu Sans',sans-serif" font-weight="200" text-anchor="middle" stroke="#f0f0f0" stroke-width="0.55">2</text>
<text x="955" y="436.4" font-size="26.5" fill="#f0f0f0" font-family="'DejaVu Sans',sans-serif" font-weight="200" text-anchor="middle" stroke="#f0f0f0" stroke-width="0.55" textLength="57" lengthAdjust="spacingAndGlyphs">3000</text>
<text transform="translate(879.6 342) rotate(-90)" font-size="26.5" fill="#f0f0f0" font-family="'DejaVu Sans',sans-serif" font-weight="200" text-anchor="middle" stroke="#f0f0f0" stroke-width="0.55" textLength="57" lengthAdjust="spacingAndGlyphs">3000</text>
<path d="M914 350 L945 383.5 M945 350 L914 383.5" stroke="#ff0000" stroke-width="3" fill="none"/>
</g>
<g id="details">
<rect x="933.5" y="416.5" width="8.5" height="4.5" stroke="#00ff00" stroke-width="1.2" fill="none"/>
<line x1="935" y1="418.8" x2="940.5" y2="418.8" stroke="#e8e8e8" stroke-width="1.6"/>
<line x1="942" y1="417" x2="942" y2="428" stroke="#00ff00" stroke-width="1.4"/>
<line x1="942" y1="428" x2="942" y2="446" stroke="#ffff00" stroke-width="1.4"/>
<line x1="926" y1="433.4" x2="975" y2="433.4" stroke="#e8e8e8" stroke-width="1.3"/>
<line x1="944" y1="440" x2="972" y2="440" stroke="#ffff00" stroke-width="2"/>
<path d="M928 444 L932 447 L936 444" stroke="#e8e8e8" stroke-width="1.1" fill="none"/>
<rect x="1013.8" y="416.5" width="8.5" height="4.5" stroke="#00ff00" stroke-width="1.2" fill="none"/>
<line x1="1015.3" y1="418.8" x2="1020.8" y2="418.8" stroke="#e8e8e8" stroke-width="1.6"/>
<line x1="1022.3" y1="417" x2="1022.3" y2="428" stroke="#00ff00" stroke-width="1.4"/>
<line x1="1022.3" y1="428" x2="1022.3" y2="446" stroke="#ffff00" stroke-width="1.4"/>
<line x1="1008" y1="433.4" x2="1068.7" y2="433.4" stroke="#e8e8e8" stroke-width="1.3"/>
<line x1="1013" y1="440" x2="1066" y2="440" stroke="#ffff00" stroke-width="2"/>
<path d="M1010 444 L1014 447 L1018 444" stroke="#e8e8e8" stroke-width="1.1" fill="none"/>
<rect x="1085.8" y="410.5" width="8.5" height="4.5" stroke="#00ff00" stroke-width="1.2" fill="none"/>
<line x1="1087.3" y1="412.8" x2="1092.8" y2="412.8" stroke="#e8e8e8" stroke-width="1.6"/>
<line x1="1094.3" y1="411" x2="1094.3" y2="428" stroke="#00ff00" stroke-width="1.4"/>
<line x1="1094.3" y1="428" x2="1094.3" y2="446" stroke="#ffff00" stroke-width="1.4"/>
<line x1="1082" y1="433.4" x2="1106.7" y2="433.4" stroke="#e8e8e8" stroke-width="1.3"/>
<path d="M1084 444 L1088 447 L1092 444" stroke="#e8e8e8" stroke-width="1.1" fill="none"/>
<rect x="1122.9" y="416.5" width="8.5" height="4.5" stroke="#00ff00" stroke-width="1.2" fill="none"/>
<line x1="1124.4" y1="418.8" x2="1129.9" y2="418.8" stroke="#e8e8e8" stroke-width="1.6"/>
<line x1="1131.4" y1="417" x2="1131.4" y2="428" stroke="#00ff00" stroke-width="1.4"/>
<line x1="1131.4" y1="428" x2="1131.4" y2="446" stroke="#ffff00" stroke-width="1.4"/>
<line x1="1117.5" y1="433.4" x2="1146" y2="433.4" stroke="#e8e8e8" stroke-width="1.3"/>
<line x1="1122" y1="440" x2="1140" y2="440" stroke="#ffff00" stroke-width="2"/>
<path d="M1119.5 444 L1123.5 447 L1127.5 444" stroke="#e8e8e8" stroke-width="1.1" fill="none"/>
<rect x="1161.8" y="416.5" width="8.5" height="4.5" stroke="#00ff00" stroke-width="1.2" fill="none"/>
<line x1="1163.3" y1="418.8" x2="1168.8" y2="418.8" stroke="#e8e8e8" stroke-width="1.6"/>
<line x1="1170.3" y1="417" x2="1170.3" y2="428" stroke="#00ff00" stroke-width="1.4"/>
<line x1="1170.3" y1="428" x2="1170.3" y2="446" stroke="#ffff00" stroke-width="1.4"/>
<line x1="1162.6" y1="433.4" x2="1223.7" y2="433.4" stroke="#e8e8e8" stroke-width="1.3"/>
<line x1="1170" y1="440" x2="1218.3" y2="440" stroke="#ffff00" stroke-width="2"/>
<path d="M1164.6 444 L1168.6 447 L1172.6 444" stroke="#e8e8e8" stroke-width="1.1" fill="none"/>
<line x1="1066.5" y1="426" x2="1066.5" y2="434" stroke="#e8e8e8" stroke-width="1.2"/>
<line x1="1048" y1="430" x2="1048" y2="434" stroke="#e8e8e8" stroke-width="1.2"/>
<line x1="1199" y1="430" x2="1199" y2="434" stroke="#e8e8e8" stroke-width="1.2"/>
<line x1="1219" y1="426" x2="1219" y2="434" stroke="#e8e8e8" stroke-width="1.2"/>
<rect x="1018" y="435.5" width="5" height="2.5" fill="#e0e0e0"/>
<rect x="1030" y="435.5" width="5" height="2.5" fill="#e0e0e0"/>
<rect x="1040" y="435.5" width="5" height="2.5" fill="#e0e0e0"/>
<rect x="1052" y="435.5" width="5" height="2.5" fill="#e0e0e0"/>
<rect x="1060" y="435.5" width="5" height="2.5" fill="#e0e0e0"/>
<rect x="1178" y="435.5" width="5" height="2.5" fill="#e0e0e0"/>
<rect x="1188" y="435.5" width="5" height="2.5" fill="#e0e0e0"/>
<rect x="1196" y="435.5" width="5" height="2.5" fill="#e0e0e0"/>
<rect x="1206" y="435.5" width="5" height="2.5" fill="#e0e0e0"/>
<rect x="1214" y="435.5" width="5" height="2.5" fill="#e0e0e0"/>
<rect x="1020" y="442" width="4" height="1.8" fill="#e0e0e0"/>
<rect x="1035" y="442" width="4" height="1.8" fill="#e0e0e0"/>
<rect x="1050" y="442" width="4" height="1.8" fill="#e0e0e0"/>
<rect x="1062" y="442" width="4" height="1.8" fill="#e0e0e0"/>
<rect x="1182" y="442" width="4" height="1.8" fill="#e0e0e0"/>
<rect x="1197" y="442" width="4" height="1.8" fill="#e0e0e0"/>
<rect x="1211" y="442" width="4" height="1.8" fill="#e0e0e0"/>
<rect x="950" y="442" width="4" height="1.8" fill="#e0e0e0"/>
<rect x="962" y="442" width="4" height="1.8" fill="#e0e0e0"/>
<line x1="932.5" y1="474.7" x2="1120.6" y2="474.7" stroke="#00ff00" stroke-width="2.2"/>
<line x1="1120.6" y1="474.7" x2="1163" y2="474.7" stroke="#e0e0e0" stroke-width="1.6"/>
<line x1="1004" y1="471.2" x2="1168" y2="471.2" stroke="#00ff00" stroke-width="1.3"/>
<path d="M952 471 l1.2 -3 l1.2 3 l3 0 l1.2 -4 l1.2 4 l7 0 l1.2 -1.5 l1.2 1.5 l2 0 l1.2 -7.8 l1.2 7.8 l2 0 l1.2 -13 l1.2 13 l5 0 l1.2 -7.8 l1.2 7.8 l3 0 l1.2 -3 l1.2 3 l7 0 l1.2 -7.8 l1.2 7.8 l7 0 l1.2 -13 l1.2 13 l3 0 l1.2 -3 l1.2 3 l3 0 l1.2 -7.8 l1.2 7.8 l7 0 l1.2 -1.5 l1.2 1.5 l2 0 l1.2 -1.5 l1.2 1.5 l2 0 l1.2 -3 l1.2 3 l2 0 l1.2 -4 l1.2 4 l2 0 l1.2 -4 l1.2 4 l7 0 l1.2 -7.8 l1.2 7.8 l7 0 l1.2 -1.5 l1.2 1.5 l7 0 l1.2 -13 l1.2 13 l7 0 l1.2 -3 l1.2 3 l5 0 l1.2 -2 l1.2 2 l2 0 l1.2 -3 l1.2 3 l7 0 l1.2 -3 l1.2 3 l5 0 l1.2 -1.5 l1.2 1.5 l7 0 l1.2 -1.5 l1.2 1.5 l5 0 l1.2 -13 l1.2 13 l7 0 l1.2 -7.8 l1.2 7.8 l5 0 l1.2 -7.8 l1.2 7.8 l7 0 l1.2 -7.8 l1.2 7.8 l3 0" stroke="#e8e8e8" stroke-width="1.1" fill="none"/>
<path d="M940 503 l1.2 -4 l1.2 4 l2 0 l1.2 -4 l1.2 4 l3 0 l1.2 -1.5 l1.2 1.5 l5 0 l1.2 -5.4 l1.2 5.4 l2 0 l1.2 -1.5 l1.2 1.5 l3 0 l1.2 -1.5 l1.2 1.5 l5 0 l1.2 -4 l1.2 4 l2 0 l1.2 -2 l1.2 2 l7 0 l1.2 -1.5 l1.2 1.5 l7 0 l1.2 -2 l1.2 2 l5 0 l1.2 -2 l1.2 2 l7 0 l1.2 -3 l1.2 3 l2 0 l1.2 -4 l1.2 4 l7 0 l1.2 -9 l1.2 9 l2 0 l1.2 -2 l1.2 2 l2 0 l1.2 -9 l1.2 9 l5 0 l1.2 -5.4 l1.2 5.4 l5 0 l1.2 -5.4 l1.2 5.4 l3 0 l1.2 -2 l1.2 2 l5 0 l1.2 -2 l1.2 2 l2 0 l1.2 -2 l1.2 2 l2 0 l1.2 -3 l1.2 3 l7 0 l1.2 -4 l1.2 4 l5 0 l1.2 -3 l1.2 3 l2 0 l1.2 -4 l1.2 4 l5 0" stroke="#e8e8e8" stroke-width="1.1" fill="none"/>
<ellipse cx="957" cy="459.5" rx="3.4" ry="2" fill="#00d8e8"/>
<line x1="957" y1="461" x2="957" y2="472" stroke="#00ff00" stroke-width="1.2"/>
<ellipse cx="1127" cy="459.5" rx="3.4" ry="2" fill="#00d8e8"/>
<line x1="1127" y1="461" x2="1127" y2="472" stroke="#00ff00" stroke-width="1.2"/>
<ellipse cx="1046" cy="492" rx="3.4" ry="2" fill="#00d8e8"/>
<line x1="1046" y1="494" x2="1046" y2="505" stroke="#0000e0" stroke-width="1.4"/>
<ellipse cx="1103" cy="492" rx="3.4" ry="2" fill="#00d8e8"/>
<line x1="1103" y1="494" x2="1103" y2="505" stroke="#0000e0" stroke-width="1.4"/>
<path d="M968 462 L975 458 L984 458 M1076 462 L1083 458 M996 464 L990 466" stroke="#00ff00" stroke-width="1.3" fill="none"/>
<path d="M1000 473 L1003 468" stroke="#00ff00" stroke-width="1.4" fill="none"/>
<path d="M1023 473 L1026 468" stroke="#00ff00" stroke-width="1.4" fill="none"/>
<path d="M1079 473 L1082 468" stroke="#00ff00" stroke-width="1.4" fill="none"/>
<path d="M1044 473 L1047 468" stroke="#00ff00" stroke-width="1.4" fill="none"/>
<path d="M1107 473 L1110 468" stroke="#00ff00" stroke-width="1.4" fill="none"/>
<rect x="936" y="477.5" width="5" height="2" fill="#e0e0e0"/>
<rect x="998" y="477.5" width="6" height="2" fill="#e0e0e0"/>
<rect x="1021" y="477.5" width="6" height="2" fill="#e0e0e0"/>
<rect x="1078" y="477.5" width="14" height="2" fill="#e0e0e0"/>
<rect x="1100" y="477.5" width="2" height="2" fill="#e0e0e0"/>
<rect x="1038" y="484" width="20" height="2.3" fill="#e0e0e0"/>
<rect x="1076" y="484" width="2" height="2" fill="#e0e0e0"/>
<line x1="930" y1="510.3" x2="1133.7" y2="510.3" stroke="#00b400" stroke-width="1.4"/>
<path d="M957.3 498 V515 H1034.7 V498 M994 502 V515" stroke="#0000e0" stroke-width="1.5" fill="none"/>
<line x1="958" y1="503.5" x2="972" y2="503.5" stroke="#0000e0" stroke-width="1.6"/>
<line x1="984" y1="503.5" x2="1018" y2="503.5" stroke="#0000e0" stroke-width="1.6"/>
<line x1="1040" y1="503.5" x2="1068" y2="503.5" stroke="#0000e0" stroke-width="1.6"/>
<line x1="1092" y1="503.5" x2="1112" y2="503.5" stroke="#0000e0" stroke-width="1.6"/>
<line x1="942" y1="502" x2="956" y2="502" stroke="#00c000" stroke-width="1.6"/>
<line x1="984" y1="502" x2="994" y2="502" stroke="#00c000" stroke-width="1.6"/>
<line x1="1026" y1="502" x2="1038" y2="502" stroke="#00c000" stroke-width="1.6"/>
<line x1="1080" y1="502" x2="1092" y2="502" stroke="#00c000" stroke-width="1.6"/>
<rect x="966" y="512.5" width="5" height="1.8" fill="#e0e0e0"/>
<rect x="986" y="512.5" width="6" height="1.8" fill="#e0e0e0"/>
<rect x="1012" y="512.5" width="5" height="1.8" fill="#e0e0e0"/>
<rect x="960" y="517" width="8" height="2" fill="#e0e0e0"/>
<rect x="1008" y="512.5" width="6" height="1.8" fill="#e0e0e0"/>
<rect x="980" y="521.5" width="19" height="2.3" fill="#e0e0e0"/>
<rect x="1024" y="515" width="3" height="3" fill="#e8e8e8"/>
<rect x="931" y="508.5" width="2" height="3" fill="#e8e8e8"/>
<path d="M1187 471 H1193.6 V506.5" stroke="#00ff00" stroke-width="1.5" fill="none"/>
<path d="M1205.5 488.7 V502 H1232" stroke="#00ff00" stroke-width="2.8" fill="none"/>
<rect x="1205.5" y="488.5" width="11.5" height="8.5" stroke="#00ff00" stroke-width="1.3" fill="none"/>
<line x1="1196" y1="492.5" x2="1217" y2="492.5" stroke="#00ff00" stroke-width="1.2"/>
<line x1="1187" y1="496.4" x2="1218.7" y2="496.4" stroke="#e0e0e0" stroke-width="1.2"/>
<line x1="1188" y1="488" x2="1205" y2="488" stroke="#e0e0e0" stroke-width="1.1"/>
<line x1="1198" y1="488" x2="1198" y2="496" stroke="#e0e0e0" stroke-width="1"/>
<line x1="1200.5" y1="488" x2="1200.5" y2="496" stroke="#e0e0e0" stroke-width="1"/>
<line x1="1203" y1="488" x2="1203" y2="496" stroke="#e0e0e0" stroke-width="1"/>
<rect x="1197" y="483" width="8" height="2" fill="#e0e0e0"/>
<path d="M1232.5 495 V502 M1232.5 495 H1235 M1232.5 498 H1234.5" stroke="#e0e0e0" stroke-width="1.1" fill="none"/>
<path d="M1217.5 503 L1219 512 L1223 509 L1229 509" stroke="#e0e0e0" stroke-width="1.1" fill="none"/>
<path d="M1210 488 L1217 483" stroke="#e0e0e0" stroke-width="1.1" fill="none"/>
<path d="M1250.7 471 H1257.3 V506.5" stroke="#00ff00" stroke-width="1.5" fill="none"/>
<path d="M1269.2 488.7 V502 H1295.7" stroke="#00ff00" stroke-width="2.8" fill="none"/>
<rect x="1269.2" y="488.5" width="11.5" height="8.5" stroke="#00ff00" stroke-width="1.3" fill="none"/>
<line x1="1259.7" y1="492.5" x2="1280.7" y2="492.5" stroke="#00ff00" stroke-width="1.2"/>
<line x1="1250.7" y1="496.4" x2="1282.4" y2="496.4" stroke="#e0e0e0" stroke-width="1.2"/>
<line x1="1251.7" y1="488" x2="1268.7" y2="488" stroke="#e0e0e0" stroke-width="1.1"/>
<line x1="1261.7" y1="488" x2="1261.7" y2="496" stroke="#e0e0e0" stroke-width="1"/>
<line x1="1264.2" y1="488" x2="1264.2" y2="496" stroke="#e0e0e0" stroke-width="1"/>
<line x1="1266.7" y1="488" x2="1266.7" y2="496" stroke="#e0e0e0" stroke-width="1"/>
<rect x="1260.7" y="483" width="8" height="2" fill="#e0e0e0"/>
<path d="M1296.2 495 V502 M1296.2 495 H1298.7 M1296.2 498 H1298.2" stroke="#e0e0e0" stroke-width="1.1" fill="none"/>
<path d="M1281.2 503 L1282.7 512 L1286.7 509 L1292.7 509" stroke="#e0e0e0" stroke-width="1.1" fill="none"/>
<path d="M1273.7 488 L1280.7 483" stroke="#e0e0e0" stroke-width="1.1" fill="none"/>
<path d="M1181 488 L1183.5 486 V490 Z" stroke="#e0e0e0" stroke-width="0.6" fill="#e0e0e0"/>
<text x="1346.8" y="427.5" font-size="5.2" fill="#f0f0f0" font-family="'Liberation Sans','Noto Sans CJK SC',sans-serif" font-weight="700">注：1.图中标高以米计</text>
<text x="1346.8" y="433.5" font-size="5.2" fill="#f0f0f0" font-family="'Liberation Sans','Noto Sans CJK SC',sans-serif" font-weight="700">2.给水管道采用</text>
<text x="1346.8" y="439" font-size="5.2" fill="#f0f0f0" font-family="'Liberation Sans','Noto Sans CJK SC',sans-serif" font-weight="700">3.排水管道坡度详见</text>
<text x="1346.8" y="443.8" font-size="5.2" fill="#f0f0f0" font-family="'Liberation Sans','Noto Sans CJK SC',sans-serif" font-weight="700">4.卫生间详见大样</text>
<text x="1346.8" y="450.6" font-size="5.2" fill="#f0f0f0" font-family="'Liberation Sans','Noto Sans CJK SC',sans-serif" font-weight="700">5.管道穿楼板处</text>
<text x="1346.8" y="456" font-size="5.2" fill="#f0f0f0" font-family="'Liberation Sans','Noto Sans CJK SC',sans-serif" font-weight="700">设置防水套管</text>
<text x="1346.8" y="460.6" font-size="5.2" fill="#f0f0f0" font-family="'Liberation Sans','Noto Sans CJK SC',sans-serif" font-weight="700">6.未尽事宜按规范</text>
<text x="1350" y="466" font-size="5.2" fill="#f0f0f0" font-family="'Liberation Sans','Noto Sans CJK SC',sans-serif" font-weight="700">施工及验收</text>
<text x="1346.8" y="472.2" font-size="5.2" fill="#f0f0f0" font-family="'Liberation Sans','Noto Sans CJK SC',sans-serif" font-weight="700">7.图例  给水  排水  消防  雨水</text>
<text x="1350" y="478" font-size="5.2" fill="#f0f0f0" font-family="'Liberation Sans','Noto Sans CJK SC',sans-serif" font-weight="700">详见说明</text>
<text x="1346.8" y="484.5" font-size="5.2" fill="#f0f0f0" font-family="'Liberation Sans','Noto Sans CJK SC',sans-serif" font-weight="700">8.其他详见设计总说明</text>
<text x="1407" y="436.5" font-size="4.5" fill="#f0f0f0" font-family="'Liberation Sans','Noto Sans CJK SC',sans-serif" font-weight="700">DN</text>
<text x="1416" y="448" font-size="4.8" fill="#f0f0f0" font-family="'Liberation Sans','Noto Sans CJK SC',sans-serif" font-weight="700">0.5%</text>
<text x="1407" y="454.5" font-size="4.8" fill="#f0f0f0" font-family="'Liberation Sans','Noto Sans CJK SC',sans-serif" font-weight="700">i=0.026</text>
<text x="1428" y="465.5" font-size="4.8" fill="#f0f0f0" font-family="'Liberation Sans','Noto Sans CJK SC',sans-serif" font-weight="700">h=0.5</text>
<text x="1363.4" y="514" font-size="7.2" fill="#0a84ff" font-family="'Liberation Sans','Noto Sans CJK SC',sans-serif" font-weight="700" textLength="25" lengthAdjust="spacingAndGlyphs">室内给排水大样</text>
<line x1="1365" y1="516.6" x2="1416" y2="516.6" stroke="#00c000" stroke-width="1.4"/>
<text x="1420.7" y="514.2" font-size="5.5" fill="#0a84ff" font-family="'Liberation Sans','Noto Sans CJK SC',sans-serif" font-weight="700" textLength="6.5" lengthAdjust="spacingAndGlyphs">1:50</text>
</g>
<g id="tb" font-family="'Liberation Sans','Noto Sans CJK SC',sans-serif" fill="#e8e8e8">
<path d="M1486.6 260.4 L1494.4 268 L1486.6 275.6 L1478.8 268 Z" stroke="#f0f0f0" stroke-width="1.4" fill="#d8d8d8"/>
<circle cx="1486.6" cy="268" r="3.2" stroke="#000" stroke-width="1.2" fill="#d8d8d8"/>
<text x="1486.6" y="282" font-size="5.4" fill="#e8e8e8" font-weight="700" text-anchor="middle" textLength="52" lengthAdjust="spacingAndGlyphs">建筑设计研究院有限公司</text>
<text x="1486.6" y="287.3" font-size="4.6" fill="#e0e0e0" text-anchor="middle">设计研究院</text>
<text x="1486.6" y="291.6" font-size="3" fill="#c8c8c8" text-anchor="middle" textLength="50" lengthAdjust="spacingAndGlyphs">Architectural Design &amp; Research Institute</text>
<text x="1486.6" y="297" font-size="3.6" fill="#d8d8d8" text-anchor="middle" textLength="38" lengthAdjust="spacingAndGlyphs">甲级证书 A144000</text>
<text x="1486.6" y="300.4" font-size="3.2" fill="#c8c8c8" text-anchor="middle" textLength="34" lengthAdjust="spacingAndGlyphs">工程设计资质证书</text>
<text x="1460.5" y="305.4" font-size="3.4" fill="#d0d0d0">建设单位　　房地产</text>
<text x="1460.5" y="308.6" font-size="3.4" fill="#d0d0d0">项目名称　住宅小区</text>
<text x="1460.5" y="311.8" font-size="3.4" fill="#d0d0d0">子项　　9#楼</text>
<text x="1460.5" y="315" font-size="3.4" fill="#d0d0d0">图名　　给排水平面图</text>
<text x="1460.5" y="321.5" font-size="3.6" fill="#d0d0d0">备注</text>
<text x="1460.5" y="407" font-size="3.8" fill="#b8b8b8">审定</text>
<text x="1460.5" y="413.5" font-size="3.8" fill="#b8b8b8">审核</text>
<text x="1460.5" y="426" font-size="3.8" fill="#b8b8b8">项目负责</text>
<text x="1460.5" y="433" font-size="3.8" fill="#b8b8b8">专业负责</text>
<text x="1460.5" y="439" font-size="3.8" fill="#b8b8b8">校对</text>
<text x="1460.5" y="445.5" font-size="3.8" fill="#b8b8b8">设计</text>
<text x="1460.5" y="452" font-size="3.8" fill="#b8b8b8">制图</text>
<text x="1460.5" y="459.5" font-size="3.8" fill="#b8b8b8">设计号</text>
<text x="1460.5" y="467" font-size="3.8" fill="#b8b8b8">比例</text>
<text x="1460.5" y="475.5" font-size="3.8" fill="#b8b8b8">日期</text>
<text x="1460.5" y="483.5" font-size="3.8" fill="#b8b8b8">图别</text>
<text x="1460.5" y="492" font-size="3.8" fill="#b8b8b8">图号</text>
<text x="1460.5" y="501" font-size="3.8" fill="#b8b8b8">版次</text>
<text x="1460.5" y="529.5" font-size="3.8" fill="#d8d8d8">给排水</text>
<text x="1460.5" y="534.5" font-size="3.8" fill="#d8d8d8">施工图</text>
<text x="1487" y="529.5" font-size="3.8" fill="#d8d8d8">水施</text>
<text x="1487" y="534.5" font-size="3.8" fill="#d8d8d8">05</text>
</g>
<g id="ui">
<path d="M702 312 L721.5 316.8 Q726 318 726 322.5 V392.5 Q726 397 721.5 398.2 L702 404.8 Z" stroke="#4f4f4f" stroke-width="0" fill="#4f4f4f"/>
<path d="M716.5 352.5 L709.5 359.5 L716.5 366.5" stroke="#9a9a9a" stroke-width="1.8" fill="none"/>
<rect x="773.9" y="590" width="6.4" height="24" fill="#00e000"/>
<path d="M777.1 574.5 L784.8 592.5 H769.4 Z" stroke="#00e000" stroke-width="0" fill="#00e000"/>
<rect x="783" y="616.5" width="22" height="6.1" fill="#ff0000"/>
<path d="M821.5 619.6 L804 612 V627.2 Z" stroke="#ff0000" stroke-width="0" fill="#ff0000"/>
<circle cx="776.9" cy="619.6" r="8.1" stroke="#0000b0" stroke-width="0" fill="#0000b0"/>
<text x="776.9" y="573.8" font-size="24" fill="#00d000" text-anchor="middle" textLength="12.6" lengthAdjust="spacingAndGlyphs">Y</text>
<text x="831.4" y="628.4" font-size="24" fill="#ff0000" text-anchor="middle" textLength="12.8" lengthAdjust="spacingAndGlyphs">X</text>
<circle cx="1683" cy="540" r="30" stroke="#1a73e0" stroke-width="0" fill="#1a73e0"/>
<polygon points="1683,526.5 1687.2,535.2 1696.8,536.5 1689.8,543.2 1691.5,552.7 1683,548.2 1674.5,552.7 1676.2,543.2 1669.2,536.5 1678.8,535.2" fill="#fff" stroke="#fff" stroke-width="3" stroke-linejoin="round"/>
</g>
</svg>
</div>
<div class="abs panel" style="top:20px;height:442px;">
<div class="tabbar">
<svg class="abs" style="left:8px;top:3px" width="14" height="36" viewBox="0 0 14 36"><path d="M3.5 8 V5.5 a3.5 3.5 0 0 1 7 0 V8" stroke="#8c8c8c" stroke-width="1.8" fill="none"/><rect x="1" y="7.5" width="12" height="8.5" rx="1.2" fill="#8c8c8c"/><rect x="6" y="10" width="2" height="3" fill="#eeeeef"/><g fill="#8c8c8c"><rect x="2" y="19" width="2.6" height="2.6"/><rect x="7.4" y="19" width="2.6" height="2.6"/><rect x="2" y="25" width="2.6" height="2.6"/><rect x="7.4" y="25" width="2.6" height="2.6"/><rect x="2" y="31" width="2.6" height="2.6"/><rect x="7.4" y="31" width="2.6" height="2.6"/></g></svg>

<div class="tab" style="left:49px;">构件列表</div>
<div class="tab act" style="left:136px;width:102px;text-align:center;">图纸管理</div>
<svg class="close" viewBox="0 0 14 14"><path d="M1 1 L13 13 M13 1 L1 13" stroke="#8a8a8a" stroke-width="1.4" fill="none"/></svg>
</div>
<div class="btn l" style="left:9px;top:53px;"><svg class="abs" style="left:12px;top:7px" width="24" height="24" viewBox="0 0 24 24" fill="none" stroke-width="1.5" stroke-linecap="round"><path d="M7.6 22.2 H2.8 Q0.8 22.2 0.8 20.2 V2.8 Q0.8 0.8 2.8 0.8 H20.2 Q22.2 0.8 22.2 2.8 V9" stroke="#585d70"/><ellipse cx="6.6" cy="6.6" rx="3" ry="1.6" stroke="#585d70" stroke-width="1.2"/><path d="M12.4 6.6 H19" stroke="#585d70"/><path d="M7.4 14 Q3.6 14 3.6 15.8 Q3.6 17.6 7.4 17.6" stroke="#585d70" stroke-width="1.2"/><rect x="9.9" y="12.6" width="2.8" height="6.4" rx="1" stroke="#2b7de9"/><path d="M12.8 15.8 H15.8 M18.4 12.6 H17.6 Q15.8 12.6 15.8 14.4 V17.8 Q15.8 19.6 17.6 19.6 H18.4" stroke="#2b7de9"/><circle cx="20.2" cy="12.4" r="1.5" stroke="#2b7de9"/><circle cx="20.2" cy="20" r="1.5" stroke="#2b7de9"/></svg></div>
<div class="btn r" style="left:58px;top:53px;"><div class="arr"></div></div>
<div class="btn l" style="left:84px;top:53px;"><svg class="abs" style="left:11px;top:7px" width="24" height="24" viewBox="0 0 24 24" fill="none" stroke-width="1.5" stroke-linecap="round"><path d="M1.2 5.6 V20.2 Q1.2 22.2 3.2 22.2 H10 M1.2 11.3 H22.6 V5.6 M1.2 17.3 H10 M9 5.6 V22.2 M15 5.6 V11.3" stroke="#585d70"/><path d="M1.2 5.6 V3 Q1.2 0.9 3.3 0.9 H20.5 Q22.6 0.9 22.6 3 V5.6 Z" stroke="#2b7de9" fill="#2b7de9" fill-opacity="0.85"/><path d="M2.6 3.3 H7.4 M10.6 3.3 H13.4 M16.6 3.3 H21.2" stroke="#fff" stroke-width="1.2"/><path d="M15.4 15.6 H14.2 Q13.2 15.6 13.2 16.6 V20.8 Q13.2 21.8 14.2 21.8 H15.4 M20 15.6 H21.2 Q22.2 15.6 22.2 16.6 V20.8 Q22.2 21.8 21.2 21.8 H20 M16.2 18.7 H19.2" stroke="#2b7de9" stroke-width="1.6"/></svg></div>
<div class="btn r" style="left:133px;top:53px;"><div class="arr"></div></div>
<div class="btn s" style="left:159px;top:53px;"><svg class="abs" style="left:11px;top:6px" width="26" height="26" viewBox="0 0 26 26" fill="none" stroke-width="1.6" stroke-linejoin="round" stroke-linecap="round"><path d="M7.2 4.6 Q7.2 1.6 10 1.6 H18 L23.2 6.8 V18 Q23.2 20.6 20.6 20.6 H18.6" stroke="#2b7de9"/><path d="M18 1.8 V6.8 H23" stroke="#2b7de9" stroke-width="1.3"/><path d="M3.4 4.6 H12 L18.4 11 V21 Q18.4 23.4 16 23.4 H3.4 Q1 23.4 1 21 V7 Q1 4.6 3.4 4.6 Z" stroke="#585d70" fill="#f5f5f5"/><path d="M12 4.8 V11 H18.2" stroke="#585d70" stroke-width="1.4"/><path d="M4.8 11 V8.2 H7.6" stroke="#585d70" stroke-width="1.4"/><path d="M15 17 V19.8 H12.2" stroke="#585d70" stroke-width="1.4"/></svg></div>
<div class="btn s" style="left:215px;top:53px;"><svg class="abs" style="left:11px;top:6px" width="26" height="26" viewBox="0 0 26 26" fill="none" stroke-width="1.6" stroke-linecap="round"><path d="M2.2 6.1 H23.2" stroke="#585d70"/><path d="M7.4 6 V4.4 Q7.4 1.8 10 1.8 H15.6 Q18.2 1.8 18.2 4.4 V6" stroke="#585d70"/><path d="M4 6.4 V20.6 Q4 23 6.4 23 H19 Q21.4 23 21.4 20.6 V6.4" stroke="#585d70"/><path d="M10.4 10.2 V18.8 M15 10.2 V18.8" stroke="#e23434" stroke-width="1.7" stroke-linecap="butt"/></svg></div>
<div class="btn l" style="left:270px;top:53px;"><svg class="abs" style="left:10px;top:8px" width="28" height="24" viewBox="0 0 28 24" fill="none" stroke-width="1.5" stroke-linejoin="round" stroke-linecap="round"><path d="M10.8 2.6 L19.6 6.9 L10.8 11.2 L2 6.9 Z" stroke="#585d70"/><path d="M2 11.6 L10.8 15.9 L13.4 14.6 M17.4 10.4 L19.6 11.6 L18.6 12.1" stroke="#585d70"/><path d="M2 16.4 L10.8 20.7 L12.4 19.9" stroke="#585d70"/><text x="11.4" y="20.4" font-family="'Liberation Sans',sans-serif" font-weight="700" font-size="7" fill="#3b86ea" stroke="none" textLength="13.6" lengthAdjust="spacingAndGlyphs">123</text></svg></div>
<div class="btn r" style="left:319px;top:53px;"><div class="arr"></div></div>
<div class="abs" style="left:0;top:103px;width:687px;height:1px;background:#dcdcdc;"></div>
<div class="cell" style="left:0px;top:104px;width:291px;height:31px;line-height:34px;text-align:center;background:#80bbf8;color:#fff;border-right-color:#80bbf8;">名称</div>
<div class="cell" style="left:291px;top:104px;width:91px;height:31px;line-height:34px;text-align:center;">比例</div>
<div class="cell" style="left:382px;top:104px;width:92px;height:31px;line-height:34px;text-align:center;">楼层</div>
<div class="cell" style="left:474px;top:104px;width:121px;height:31px;line-height:34px;text-align:center;">图纸类别</div>
<div class="cell" style="left:595px;top:104px;width:92px;height:31px;line-height:34px;text-align:center;">分层</div>
<div class="cell" style="left:0px;top:135px;width:291px;height:31px;line-height:34px;padding-left:32px;"><span class="la">9#</span>楼图纸 原版图纸<span class="la">_Model</span></div>
<div class="cell" style="left:291px;top:135px;width:91px;height:31px;line-height:34px;padding-left:4px;">默认</div>
<div class="cell" style="left:382px;top:135px;width:92px;height:31px;line-height:34px;padding-left:4px;"></div>
<div class="cell" style="left:474px;top:135px;width:121px;height:31px;line-height:34px;padding-left:4px;"></div>
<div class="cell" style="left:595px;top:135px;width:92px;height:31px;line-height:34px;padding-left:4px;"></div>
<div class="cell" style="left:0px;top:166px;width:291px;height:32px;line-height:35px;padding-left:46px;">机房层给排水平面图</div>
<div class="cell" style="left:291px;top:166px;width:91px;height:32px;line-height:35px;padding-left:4px;">默认</div>
<div class="cell" style="left:382px;top:166px;width:92px;height:32px;line-height:35px;padding-left:4px;">机房层</div>
<div class="cell" style="left:474px;top:166px;width:121px;height:32px;line-height:35px;padding-left:4px;">多种</div>
<div class="cell" style="left:595px;top:166px;width:92px;height:32px;line-height:35px;padding-left:4px;">分层<span class="la">1</span></div>
<div class="cell" style="left:0px;top:198px;width:291px;height:31px;line-height:34px;padding-left:46px;">二十层给排水平面图</div>
<div class="cell" style="left:291px;top:198px;width:91px;height:31px;line-height:34px;padding-left:4px;">默认</div>
<div class="cell" style="left:382px;top:198px;width:92px;height:31px;line-height:34px;padding-left:4px;">第<span class="la">20</span>层</div>
<div class="cell" style="left:474px;top:198px;width:121px;height:31px;line-height:34px;padding-left:4px;">多种</div>
<div class="cell" style="left:595px;top:198px;width:92px;height:31px;line-height:34px;padding-left:4px;">分层<span class="la">1</span></div>
<div class="cell" style="left:0px;top:229px;width:291px;height:32px;line-height:35px;padding-left:46px;">三<span class="la">~</span>十九层给排水平面图</div>
<div class="cell" style="left:291px;top:229px;width:91px;height:32px;line-height:35px;padding-left:4px;">默认</div>
<div class="cell" style="left:382px;top:229px;width:92px;height:32px;line-height:35px;padding-left:4px;">多种</div>
<div class="cell" style="left:474px;top:229px;width:121px;height:32px;line-height:35px;padding-left:4px;">多种</div>
<div class="cell" style="left:595px;top:229px;width:92px;height:32px;line-height:35px;padding-left:4px;">分层<span class="la">1</span></div>
<div class="cell" style="left:0px;top:261px;width:291px;height:31px;line-height:34px;padding-left:46px;">二层给排水平面图</div>
<div class="cell" style="left:291px;top:261px;width:91px;height:31px;line-height:34px;padding-left:4px;">默认</div>
<div class="cell" style="left:382px;top:261px;width:92px;height:31px;line-height:34px;padding-left:4px;">第<span class="la">2</span>层</div>
<div class="cell" style="left:474px;top:261px;width:121px;height:31px;line-height:34px;padding-left:4px;">多种</div>
<div class="cell" style="left:595px;top:261px;width:92px;height:31px;line-height:34px;padding-left:4px;">分层<span class="la">1</span></div>
<div class="cell" style="left:0px;top:292px;width:291px;height:32px;line-height:35px;padding-left:46px;background:#d5e9fd;border:2px solid #767676;line-height:32px;padding-left:44px;">室内<span class="la">-</span>出管井大样图</div>
<div class="cell" style="left:291px;top:292px;width:91px;height:32px;line-height:35px;padding-left:4px;background:#d5e9fd;">默认</div>
<div class="cell" style="left:382px;top:292px;width:92px;height:32px;line-height:35px;padding-left:4px;background:#d5e9fd;">第<span class="la">2</span>层</div>
<div class="cell" style="left:474px;top:292px;width:121px;height:32px;line-height:35px;padding-left:4px;background:#d5e9fd;">多种</div>
<div class="cell" style="left:595px;top:292px;width:92px;height:32px;line-height:35px;padding-left:4px;background:#d5e9fd;">分层<span class="la">2</span></div>
<div class="cell" style="left:0px;top:324px;width:291px;height:31px;line-height:34px;padding-left:46px;"><span class="la">7#9#</span>楼一层给排水平面图</div>
<div class="cell" style="left:291px;top:324px;width:91px;height:31px;line-height:34px;padding-left:4px;">默认</div>
<div class="cell" style="left:382px;top:324px;width:92px;height:31px;line-height:34px;padding-left:4px;">首层</div>
<div class="cell" style="left:474px;top:324px;width:121px;height:31px;line-height:34px;padding-left:4px;">多种</div>
<div class="cell" style="left:595px;top:324px;width:92px;height:31px;line-height:34px;padding-left:4px;">分层<span class="la">1</span></div>
<div class="cell" style="left:0px;top:355px;width:291px;height:32px;line-height:35px;padding-left:46px;">地下一层给排水平面图</div>
<div class="cell" style="left:291px;top:355px;width:91px;height:32px;line-height:35px;padding-left:4px;">默认</div>
<div class="cell" style="left:382px;top:355px;width:92px;height:32px;line-height:35px;padding-left:4px;">第<span class="la">-1</span>层</div>
<div class="cell" style="left:474px;top:355px;width:121px;height:32px;line-height:35px;padding-left:4px;">多种</div>
<div class="cell" style="left:595px;top:355px;width:92px;height:32px;line-height:35px;padding-left:4px;">分层<span class="la">1</span></div>
<div class="cell" style="left:0px;top:387px;width:291px;height:31px;line-height:34px;padding-left:46px;"><span class="la">9#</span>楼地下二层给排水平面图</div>
<div class="cell" style="left:291px;top:387px;width:91px;height:31px;line-height:34px;padding-left:4px;">默认</div>
<div class="cell" style="left:382px;top:387px;width:92px;height:31px;line-height:34px;padding-left:4px;">第<span class="la">-2</span>层</div>
<div class="cell" style="left:474px;top:387px;width:121px;height:31px;line-height:34px;padding-left:4px;">多种</div>
<div class="cell" style="left:595px;top:387px;width:92px;height:31px;line-height:34px;padding-left:4px;">分层<span class="la">1</span></div>
<div class="abs" style="left:12px;top:160px;width:1px;height:242px;background:#cfcfcf;"></div>
<div class="abs" style="left:12px;top:182px;width:24px;height:1px;background:#cfcfcf;"></div>
<div class="abs" style="left:12px;top:213px;width:24px;height:1px;background:#cfcfcf;"></div>
<div class="abs" style="left:12px;top:245px;width:24px;height:1px;background:#cfcfcf;"></div>
<div class="abs" style="left:12px;top:276px;width:24px;height:1px;background:#cfcfcf;"></div>
<div class="abs" style="left:12px;top:308px;width:24px;height:1px;background:#cfcfcf;"></div>
<div class="abs" style="left:12px;top:339px;width:24px;height:1px;background:#cfcfcf;"></div>
<div class="abs" style="left:12px;top:371px;width:24px;height:1px;background:#cfcfcf;"></div>
<div class="abs" style="left:12px;top:402px;width:24px;height:1px;background:#cfcfcf;"></div>
<div class="abs" style="left:4px;top:141px;width:18px;height:18px;box-sizing:border-box;border:1px solid #8c8c8c;border-radius:2px;background:#fff;"><div class="abs" style="left:4px;top:7px;width:8px;height:1px;background:#555;"></div></div>
</div>
<div class="abs panel" style="top:468px;height:200px;border-bottom:none;">
<div class="tabbar" style="height:43px;">
<svg class="abs" style="left:8px;top:4px" width="14" height="36" viewBox="0 0 14 36"><path d="M3.5 8 V5.5 a3.5 3.5 0 0 1 7 0 V8" stroke="#8c8c8c" stroke-width="1.8" fill="none"/><rect x="1" y="7.5" width="12" height="8.5" rx="1.2" fill="#8c8c8c"/><rect x="6" y="10" width="2" height="3" fill="#eeeeef"/><g fill="#8c8c8c"><rect x="2" y="19" width="2.6" height="2.6"/><rect x="7.4" y="19" width="2.6" height="2.6"/><rect x="2" y="25" width="2.6" height="2.6"/><rect x="7.4" y="25" width="2.6" height="2.6"/><rect x="2" y="31" width="2.6" height="2.6"/><rect x="7.4" y="31" width="2.6" height="2.6"/></g></svg>

<div class="tab" style="left:49px;top:0;height:43px;">属性</div>
<div class="tab act" style="left:101px;width:102px;text-align:center;top:0;height:43px;">图层管理</div>
<svg class="close" style="top:16px" viewBox="0 0 14 14"><path d="M1 1 L13 13 M13 1 L1 13" stroke="#8a8a8a" stroke-width="1.4" fill="none"/></svg>
</div>
<div class="btn s" style="left:9px;top:53px;"><svg class="abs" style="left:11px;top:8px" width="26" height="24" viewBox="0 0 26 24" fill="none" stroke-width="1.5" stroke-linecap="round"><rect x="1.6" y="1.8" width="21.6" height="4.8" rx="2.4" stroke="#585d70"/><path d="M11.4 14.4 H4 Q1.6 14.4 1.6 12 Q1.6 9.6 4 9.6 H20.6 Q23 9.6 23.2 11.4" stroke="#2b7de9"/><path d="M10.8 22 H4 Q1.6 22 1.6 19.6 Q1.6 17.2 4 17.2 H11" stroke="#585d70"/><ellipse cx="17.6" cy="17.8" rx="5.2" ry="3.7" stroke="#2b7de9" stroke-width="1.3"/><path d="M16.6 16.4 V19.4 H19.4 Z" fill="#2b7de9" stroke="#2b7de9" stroke-width="0.6"/></svg></div>
<div class="btn s" style="left:65px;top:53px;"><svg class="abs" style="left:11px;top:8px" width="26" height="24" viewBox="0 0 26 24" fill="none" stroke-width="1.5" stroke-linecap="round"><rect x="1.6" y="1.8" width="21.6" height="4.8" rx="2.4" stroke="#585d70"/><rect x="1.6" y="9.6" width="21.6" height="4.8" rx="2.4" stroke="#2b7de9" fill="#cfe0fb"/><path d="M10.6 22 H4 Q1.6 22 1.6 19.6 Q1.6 17.2 4 17.2 H10.6" stroke="#585d70"/><path d="M13.2 17.6 Q17.8 22 23 17.6 M14.4 19.8 L13.4 21.6 M16.6 20.6 L16.2 22.4 M19.2 20.6 L19.6 22.4 M21.6 19.8 L22.8 21.6" stroke="#2b7de9" stroke-width="1.2"/></svg></div>
<div class="btn s" style="left:120px;top:53px;"><svg class="abs" style="left:11px;top:8px" width="26" height="24" viewBox="0 0 26 24" fill="none" stroke-width="1.5" stroke-linecap="round"><rect x="1.6" y="1.8" width="21.6" height="4.8" rx="2.4" stroke="#585d70"/><path d="M12 14.4 H4 Q1.6 14.4 1.6 12 Q1.6 9.6 4 9.6 H23" stroke="#2b7de9"/><path d="M12.6 22 H4 Q1.6 22 1.6 19.6 Q1.6 17.2 4 17.2 H12.6" stroke="#585d70"/><path d="M19.2 11.6 L14.6 15.2 L19.2 18.8 V16.6 Q22 16.8 22.6 21.4 Q24.6 14.4 19.2 13.8 Z" fill="#2b7de9" stroke="#2b7de9" stroke-width="0.8" stroke-linejoin="round"/></svg></div>
<div class="abs" style="left:0;top:103px;width:688px;height:1px;background:#dcdcdc;"></div>
<div class="cell" style="left:0px;top:104px;width:151px;height:31px;line-height:34px;text-align:center;word-spacing:2px;">开 <span class="la">/</span> 关</div>
<div class="cell" style="left:151px;top:104px;width:152px;height:31px;line-height:34px;text-align:center;word-spacing:2px;">颜色</div>
<div class="cell" style="left:303px;top:104px;width:385px;height:31px;line-height:34px;text-align:center;word-spacing:2px;">名称</div>
<div class="cell" style="left:0px;top:135px;width:151px;height:31px;line-height:34px;"><svg class="abs" style="left:64px;top:5px" width="21" height="21" viewBox="0 0 21 21"><rect width="21" height="21" rx="2.5" fill="#2f80ea"/><path d="M5 10.5 L9 14.5 L16 6.5" stroke="#fff" stroke-width="2.2" fill="none"/></svg></div>
<div class="cell" style="left:151px;top:135px;width:152px;height:31px;line-height:34px;"><div class="abs" style="left:78px;top:10px;width:0;height:0;border-top:5px solid transparent;border-bottom:5px solid transparent;border-left:6px solid #7a7a7a;"></div></div>
<div class="cell" style="left:303px;top:135px;width:385px;height:31px;line-height:34px;padding-left:5px;">已提取的 <span class="lu">CAD</span> 图层</div>
<div class="cell" style="left:0px;top:166px;width:151px;height:32px;line-height:35px;"><svg class="abs" style="left:64px;top:5px" width="21" height="21" viewBox="0 0 21 21"><rect width="21" height="21" rx="2.5" fill="#2f80ea"/><path d="M5 10.5 L9 14.5 L16 6.5" stroke="#fff" stroke-width="2.2" fill="none"/></svg></div>
<div class="cell" style="left:151px;top:166px;width:152px;height:32px;line-height:35px;"><div class="abs" style="left:78px;top:10px;width:0;height:0;border-top:5px solid transparent;border-bottom:5px solid transparent;border-left:6px solid #7a7a7a;"></div></div>
<div class="cell" style="left:303px;top:166px;width:385px;height:32px;line-height:35px;padding-left:5px;"><span class="lu">CAD</span> 原始图层</div>
</div>
</body>
</html>
